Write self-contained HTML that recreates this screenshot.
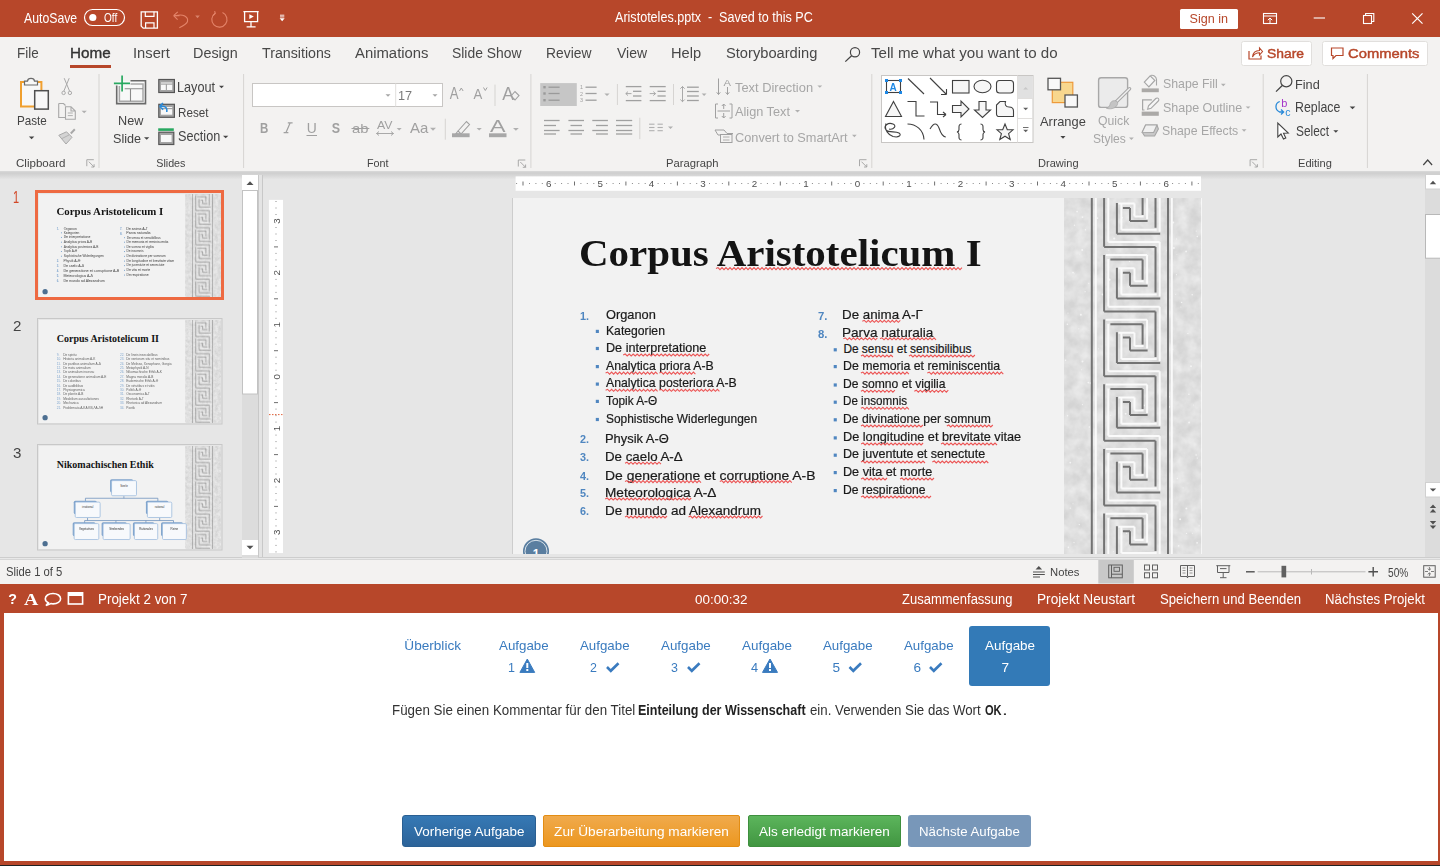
<!DOCTYPE html>
<html><head><meta charset="utf-8">
<style>
*{box-sizing:border-box;margin:0;padding:0}
html,body{width:1440px;height:866px;overflow:hidden;background:#E6E6E6;font-family:"Liberation Sans",sans-serif;position:relative}
.a{position:absolute}
.t{position:absolute;white-space:pre;transform-origin:0 0}
svg{position:absolute;overflow:visible}
.th .t:not([style*="Serif"]){opacity:.7}
</style></head><body>

<div class="a" style="left:0;top:0;width:1440px;height:37px;background:#B7472A"></div>
<div class="a" style="left:0;top:37px;width:1440px;height:134px;background:#F3F2F1"></div>
<div class="a" style="left:0;top:171px;width:1440px;height:8px;background:linear-gradient(#DADADA 0,#CECECE 25%,#E4E4E4 100%)"></div>
<div class="a" style="left:0;top:557px;width:1440px;height:1px;background:#CDCDCD"></div><div class="a" style="left:0;top:558px;width:1440px;height:1px;background:#E8E8E8"></div><div class="a" style="left:0;top:559px;width:1440px;height:1px;background:#D6D6D6"></div>
<div class="a" style="left:0;top:560px;width:1440px;height:24px;background:#F3F2F1"></div>
<div class="a" style="left:0;top:584px;width:1440px;height:282px;background:#B7472A"></div>
<div class="a" style="left:4px;top:613px;width:1434px;height:248px;background:#FFFFFF"></div>
<div class="a" style="left:0;top:865px;width:1440px;height:1px;background:#222"></div>
<div class="a" style="left:969px;top:626px;width:81px;height:60px;background:#337AB7;border-radius:3px"></div>
<div class="a" style="left:402px;top:815px;width:134px;height:32px;background:linear-gradient(#3679B5,#2C6399);border-radius:3px;border:1px solid #2A5F92"></div>
<div class="a" style="left:543px;top:815px;width:197px;height:32px;background:linear-gradient(#F0AA4C,#EC971F);border-radius:2px;border:1px solid #E38D13"></div>
<div class="a" style="left:748px;top:815px;width:153px;height:32px;background:linear-gradient(#5CB55C,#419641);border-radius:2px;border:1px solid #3E8F3E"></div>
<div class="a" style="left:908px;top:815px;width:123px;height:32px;background:#7897B9;border-radius:3px"></div>
<div class="a" style="left:512px;top:198px;width:1px;height:356px;background:#CDCDCD"></div><div class="a" style="left:513px;top:198px;width:689px;height:356px;overflow:hidden;background:#F2F2F2"><svg width="688" height="391" style="left:0;top:0"><defs><filter id="mrb" x="0" y="0" width="100%%" height="100%%"><feTurbulence type="fractalNoise" baseFrequency="0.08" numOctaves="3" seed="4"/><feColorMatrix values="0 0 0 0 1  0 0 0 0 1  0 0 0 0 1  0 0 0 -1.6 1.25"/></filter></defs><rect x="551" y="-20" width="137" height="431" fill="#D4D4D4"/><rect x="551" y="-20" width="137" height="431" fill="#fff" filter="url(#mrb)" opacity="0.55"/><g fill="#F4F4F4"><circle cx="595.7" cy="52.0" r="0.5"/><circle cx="561.4" cy="27.3" r="0.7"/><circle cx="663.6" cy="40.9" r="0.6"/><circle cx="667.9" cy="109.0" r="0.5"/><circle cx="567.9" cy="116.8" r="1.0"/><circle cx="576.4" cy="229.0" r="0.8"/><circle cx="560.0" cy="74.6" r="0.9"/><circle cx="613.2" cy="113.2" r="0.9"/><circle cx="670.1" cy="289.8" r="0.6"/><circle cx="684.3" cy="38.5" r="0.7"/><circle cx="654.2" cy="52.5" r="0.7"/><circle cx="557.3" cy="264.6" r="0.9"/><circle cx="613.6" cy="335.2" r="0.7"/><circle cx="641.7" cy="14.9" r="0.9"/><circle cx="686.1" cy="327.8" r="0.6"/><circle cx="560.0" cy="305.7" r="0.5"/><circle cx="585.4" cy="150.7" r="0.5"/><circle cx="612.6" cy="215.8" r="1.0"/><circle cx="668.6" cy="104.4" r="0.7"/><circle cx="600.4" cy="353.4" r="0.5"/><circle cx="575.8" cy="85.3" r="0.6"/><circle cx="552.6" cy="162.2" r="0.7"/><circle cx="628.5" cy="381.7" r="0.8"/><circle cx="673.4" cy="310.6" r="1.0"/><circle cx="659.7" cy="151.3" r="0.7"/><circle cx="566.0" cy="250.7" r="0.4"/><circle cx="561.1" cy="75.8" r="0.5"/><circle cx="572.4" cy="31.7" r="0.7"/><circle cx="555.4" cy="349.4" r="0.8"/><circle cx="572.1" cy="93.7" r="0.6"/><circle cx="601.2" cy="40.5" r="1.1"/><circle cx="565.8" cy="130.8" r="0.6"/><circle cx="663.9" cy="56.4" r="0.4"/><circle cx="680.4" cy="207.1" r="0.5"/><circle cx="684.1" cy="344.8" r="0.9"/><circle cx="656.2" cy="208.9" r="0.9"/><circle cx="596.5" cy="81.7" r="1.1"/><circle cx="667.1" cy="321.3" r="1.0"/><circle cx="589.7" cy="96.5" r="1.1"/><circle cx="612.4" cy="375.1" r="1.1"/><circle cx="578.6" cy="74.0" r="0.8"/><circle cx="673.5" cy="335.4" r="0.7"/><circle cx="641.2" cy="363.9" r="0.9"/><circle cx="616.5" cy="63.4" r="0.6"/><circle cx="660.1" cy="389.4" r="0.7"/><circle cx="606.2" cy="379.1" r="0.5"/><circle cx="569.2" cy="52.1" r="1.0"/><circle cx="660.9" cy="50.1" r="1.0"/><circle cx="684.3" cy="260.1" r="0.6"/><circle cx="683.1" cy="257.0" r="0.8"/><circle cx="678.0" cy="168.3" r="1.0"/><circle cx="663.5" cy="76.7" r="0.6"/><circle cx="674.9" cy="135.4" r="0.7"/><circle cx="675.9" cy="196.2" r="0.8"/><circle cx="576.7" cy="-8.4" r="1.0"/><circle cx="575.3" cy="184.6" r="0.9"/><circle cx="656.3" cy="198.7" r="0.8"/><circle cx="654.6" cy="365.0" r="0.7"/><circle cx="616.5" cy="377.0" r="1.0"/><circle cx="679.2" cy="96.7" r="0.8"/><circle cx="679.3" cy="335.2" r="0.5"/><circle cx="568.4" cy="171.7" r="0.5"/><circle cx="584.5" cy="20.1" r="0.9"/><circle cx="673.1" cy="53.5" r="0.9"/><circle cx="641.1" cy="48.8" r="1.1"/><circle cx="581.6" cy="381.5" r="0.7"/><circle cx="617.8" cy="396.8" r="0.5"/><circle cx="578.4" cy="120.9" r="0.9"/><circle cx="554.6" cy="217.7" r="0.7"/><circle cx="554.4" cy="126.2" r="0.8"/><circle cx="621.2" cy="16.4" r="1.0"/><circle cx="683.2" cy="33.1" r="0.6"/><circle cx="557.3" cy="310.2" r="0.6"/><circle cx="569.5" cy="163.5" r="1.0"/><circle cx="662.6" cy="96.3" r="0.5"/><circle cx="676.1" cy="224.5" r="0.9"/><circle cx="564.1" cy="13.6" r="0.9"/><circle cx="609.4" cy="19.8" r="0.8"/><circle cx="660.2" cy="24.4" r="1.0"/><circle cx="561.0" cy="344.6" r="0.7"/><circle cx="597.8" cy="217.3" r="0.6"/><circle cx="569.4" cy="206.6" r="0.6"/><circle cx="566.8" cy="56.4" r="0.4"/><circle cx="579.2" cy="118.2" r="0.6"/><circle cx="654.5" cy="109.2" r="0.8"/><circle cx="576.0" cy="132.6" r="0.4"/><circle cx="585.8" cy="-3.7" r="0.8"/><circle cx="577.6" cy="185.1" r="1.1"/><circle cx="566.3" cy="326.6" r="0.7"/><circle cx="620.4" cy="272.7" r="0.6"/><circle cx="664.4" cy="280.5" r="0.8"/><circle cx="569.5" cy="19.1" r="0.9"/><circle cx="665.6" cy="347.8" r="0.9"/><circle cx="587.5" cy="385.3" r="0.8"/><circle cx="564.1" cy="154.2" r="0.4"/><circle cx="555.0" cy="115.0" r="0.6"/><circle cx="631.1" cy="207.5" r="0.9"/></g><rect x="577.8" y="-20" width="2" height="431" fill="#737373"/><rect x="581.8" y="-20" width="2" height="431" fill="#FAFAFA"/><rect x="654" y="-20" width="2" height="431" fill="#737373"/><rect x="657.8" y="-20" width="2" height="431" fill="#FAFAFA"/><path d="M595.3 -85.3 H646.7 M646.7 -85.3 V-30.9 M595.3 -68.2 V-20.8 M592.8 -72.2 H634.1 M634.1 -72.2 V-43.5 M608.4 -59.1 V-32.9 M608.4 -32.9 H643.7 M605.4 -59.1 H621.5 M621.5 -59.1 V-46.0 M621.5 -46.0 H630.6 M595.3 -20.7 H646.7 M646.7 -20.7 V33.7 M595.3 -3.6 V43.8 M592.8 -7.6 H634.1 M634.1 -7.6 V21.1 M608.4 5.5 V31.7 M608.4 31.7 H643.7 M605.4 5.5 H621.5 M621.5 5.5 V18.6 M621.5 18.6 H630.6 M595.3 44.0 H646.7 M646.7 44.0 V98.4 M595.3 61.1 V108.5 M592.8 57.1 H634.1 M634.1 57.1 V85.8 M608.4 70.2 V96.4 M608.4 96.4 H643.7 M605.4 70.2 H621.5 M621.5 70.2 V83.3 M621.5 83.3 H630.6 M595.3 108.7 H646.7 M646.7 108.7 V163.1 M595.3 125.8 V173.2 M592.8 121.8 H634.1 M634.1 121.8 V150.4 M608.4 134.8 V161.1 M608.4 161.1 H643.7 M605.4 134.8 H621.5 M621.5 134.8 V147.9 M621.5 147.9 H630.6 M595.3 173.3 H646.7 M646.7 173.3 V227.7 M595.3 190.4 V237.8 M592.8 186.4 H634.1 M634.1 186.4 V215.1 M608.4 199.5 V225.7 M608.4 225.7 H643.7 M605.4 199.5 H621.5 M621.5 199.5 V212.6 M621.5 212.6 H630.6 M595.3 238.0 H646.7 M646.7 238.0 V292.4 M595.3 255.1 V302.5 M592.8 251.1 H634.1 M634.1 251.1 V279.8 M608.4 264.2 V290.4 M608.4 290.4 H643.7 M605.4 264.2 H621.5 M621.5 264.2 V277.2 M621.5 277.2 H630.6 M595.3 302.6 H646.7 M646.7 302.6 V357.0 M595.3 319.7 V367.1 M592.8 315.7 H634.1 M634.1 315.7 V344.4 M608.4 328.8 V355.0 M608.4 355.0 H643.7 M605.4 328.8 H621.5 M621.5 328.8 V341.9 M621.5 341.9 H630.6 M595.3 367.2 H646.7 M646.7 367.2 V421.6 M595.3 384.4 V431.8 M592.8 380.4 H634.1 M634.1 380.4 V409.1 M608.4 393.4 V419.6 M608.4 419.6 H643.7 M605.4 393.4 H621.5 M621.5 393.4 V406.6 M621.5 406.6 H630.6 M595.3 431.9 H646.7 M646.7 431.9 V486.3 M595.3 449.0 V496.4 M592.8 445.0 H634.1 M634.1 445.0 V473.7 M608.4 458.1 V484.3 M608.4 484.3 H643.7 M605.4 458.1 H621.5 M621.5 458.1 V471.2 M621.5 471.2 H630.6 M595.3 496.6 H646.7 M646.7 496.6 V551.0 M595.3 513.7 V561.1 M592.8 509.7 H634.1 M634.1 509.7 V538.4 M608.4 522.8 V549.0 M608.4 549.0 H643.7 M605.4 522.8 H621.5 M621.5 522.8 V535.9 M621.5 535.9 H630.6" fill="none" stroke="#FAFAFA" stroke-width="2"/><path d="M591.1 -80.5 H642.5 M642.5 -80.5 V-34.9 M591.1 -72.4 V-15.8 M597.4 -67.7 H629.6 M629.6 -67.7 V-47.5 M603.9 -59.6 V-28.9 M603.9 -28.9 H647.2 M609.9 -54.6 H617.0 M617.0 -54.6 V-41.5 M617.0 -41.5 H634.6 M591.1 -15.8 H642.5 M642.5 -15.8 V29.7 M591.1 -7.8 V48.8 M597.4 -3.1 H629.6 M629.6 -3.1 V17.1 M603.9 5.0 V35.7 M603.9 35.7 H647.2 M609.9 10.0 H617.0 M617.0 10.0 V23.1 M617.0 23.1 H634.6 M591.1 48.9 H642.5 M642.5 48.9 V94.4 M591.1 56.9 V113.5 M597.4 61.6 H629.6 M629.6 61.6 V81.8 M603.9 69.7 V100.4 M603.9 100.4 H647.2 M609.9 74.7 H617.0 M617.0 74.7 V87.8 M617.0 87.8 H634.6 M591.1 113.5 H642.5 M642.5 113.5 V159.1 M591.1 121.6 V178.2 M597.4 126.2 H629.6 M629.6 126.2 V146.4 M603.9 134.3 V165.1 M603.9 165.1 H647.2 M609.9 139.4 H617.0 M617.0 139.4 V152.4 M617.0 152.4 H634.6 M591.1 178.2 H642.5 M642.5 178.2 V223.7 M591.1 186.2 V242.8 M597.4 190.9 H629.6 M629.6 190.9 V211.1 M603.9 199.0 V229.7 M603.9 229.7 H647.2 M609.9 204.0 H617.0 M617.0 204.0 V217.1 M617.0 217.1 H634.6 M591.1 242.8 H642.5 M642.5 242.8 V288.4 M591.1 250.9 V307.5 M597.4 255.6 H629.6 M629.6 255.6 V275.8 M603.9 263.7 V294.4 M603.9 294.4 H647.2 M609.9 268.7 H617.0 M617.0 268.7 V281.8 M617.0 281.8 H634.6 M591.1 307.5 H642.5 M642.5 307.5 V353.0 M591.1 315.5 V372.1 M597.4 320.2 H629.6 M629.6 320.2 V340.4 M603.9 328.3 V359.0 M603.9 359.0 H647.2 M609.9 333.3 H617.0 M617.0 333.3 V346.4 M617.0 346.4 H634.6 M591.1 372.1 H642.5 M642.5 372.1 V417.6 M591.1 380.1 V436.8 M597.4 384.9 H629.6 M629.6 384.9 V405.1 M603.9 392.9 V423.6 M603.9 423.6 H647.2 M609.9 397.9 H617.0 M617.0 397.9 V411.1 M617.0 411.1 H634.6 M591.1 436.8 H642.5 M642.5 436.8 V482.3 M591.1 444.8 V501.4 M597.4 449.5 H629.6 M629.6 449.5 V469.7 M603.9 457.6 V488.3 M603.9 488.3 H647.2 M609.9 462.6 H617.0 M617.0 462.6 V475.7 M617.0 475.7 H634.6 M591.1 501.4 H642.5 M642.5 501.4 V547.0 M591.1 509.5 V566.1 M597.4 514.2 H629.6 M629.6 514.2 V534.4 M603.9 522.3 V553.0 M603.9 553.0 H647.2 M609.9 527.3 H617.0 M617.0 527.3 V540.4 M617.0 540.4 H634.6" fill="none" stroke="#737373" stroke-width="2"/></svg><svg width="688" height="391" style="left:0;top:0"><rect x="82.8" y="131.8" width="3.1" height="3.2" fill="#4F86C0"/><rect x="82.8" y="148.9" width="3.1" height="3.2" fill="#4F86C0"/><rect x="82.8" y="167.0" width="3.1" height="3.2" fill="#4F86C0"/><rect x="82.8" y="184.5" width="3.1" height="3.2" fill="#4F86C0"/><rect x="82.8" y="201.8" width="3.1" height="3.2" fill="#4F86C0"/><rect x="82.8" y="219.9" width="3.1" height="3.2" fill="#4F86C0"/><rect x="320.7" y="150.2" width="3.1" height="3.2" fill="#4F86C0"/><rect x="320.7" y="167.0" width="3.1" height="3.2" fill="#4F86C0"/><rect x="320.7" y="185.4" width="3.1" height="3.2" fill="#4F86C0"/><rect x="320.7" y="202.6" width="3.1" height="3.2" fill="#4F86C0"/><rect x="320.7" y="220.2" width="3.1" height="3.2" fill="#4F86C0"/><rect x="320.7" y="238.3" width="3.1" height="3.2" fill="#4F86C0"/><rect x="320.7" y="255.6" width="3.1" height="3.2" fill="#4F86C0"/><rect x="320.7" y="273.0" width="3.1" height="3.2" fill="#4F86C0"/><rect x="320.7" y="291.0" width="3.1" height="3.2" fill="#4F86C0"/></svg><div class="t" style="left:65.81px;top:37.22px;font-size:37.692px;line-height:37.692px;color:#141414;font-weight:bold;font-family:'Liberation Serif', serif;transform:scaleX(1.0865);">Corpus Aristotelicum I</div>
<div class="t" style="left:92.60px;top:110.41px;font-size:13.043px;line-height:13.043px;color:#1A1A1A;transform:scaleX(0.9829);-webkit-text-stroke:0.2px #1A1A1A;">Organon</div>
<div class="t" style="left:92.60px;top:127.60px;font-size:11.884px;line-height:11.884px;color:#1A1A1A;transform:scaleX(1.0258);-webkit-text-stroke:0.2px #1A1A1A;">Kategorien</div>
<div class="t" style="left:92.60px;top:144.70px;font-size:11.884px;line-height:11.884px;color:#1A1A1A;transform:scaleX(1.0623);-webkit-text-stroke:0.2px #1A1A1A;">De interpretatione</div>
<div class="t" style="left:92.60px;top:162.80px;font-size:11.884px;line-height:11.884px;color:#1A1A1A;transform:scaleX(1.0322);-webkit-text-stroke:0.2px #1A1A1A;">Analytica priora A-B</div>
<div class="t" style="left:92.60px;top:180.30px;font-size:11.884px;line-height:11.884px;color:#1A1A1A;transform:scaleX(1.0309);-webkit-text-stroke:0.2px #1A1A1A;">Analytica posteriora A-B</div>
<div class="t" style="left:92.60px;top:197.60px;font-size:11.884px;line-height:11.884px;color:#1A1A1A;transform:scaleX(0.9943);-webkit-text-stroke:0.2px #1A1A1A;">Topik A-Θ</div>
<div class="t" style="left:92.60px;top:215.70px;font-size:11.884px;line-height:11.884px;color:#1A1A1A;transform:scaleX(1.0033);-webkit-text-stroke:0.2px #1A1A1A;">Sophistische Widerlegungen</div>
<div class="t" style="left:91.61px;top:233.81px;font-size:13.043px;line-height:13.043px;color:#1A1A1A;transform:scaleX(0.9901);-webkit-text-stroke:0.2px #1A1A1A;">Physik A-Θ</div>
<div class="t" style="left:91.58px;top:252.21px;font-size:13.043px;line-height:13.043px;color:#1A1A1A;transform:scaleX(1.0213);-webkit-text-stroke:0.2px #1A1A1A;">De caelo A-Δ</div>
<div class="t" style="left:91.53px;top:270.61px;font-size:13.043px;line-height:13.043px;color:#1A1A1A;transform:scaleX(1.0680);-webkit-text-stroke:0.2px #1A1A1A;">De generatione et corruptione A-B</div>
<div class="t" style="left:91.55px;top:287.91px;font-size:13.043px;line-height:13.043px;color:#1A1A1A;transform:scaleX(1.0460);-webkit-text-stroke:0.2px #1A1A1A;">Meteorologica A-Δ</div>
<div class="t" style="left:91.56px;top:306.01px;font-size:13.043px;line-height:13.043px;color:#1A1A1A;transform:scaleX(1.0352);-webkit-text-stroke:0.2px #1A1A1A;">De mundo ad Alexandrum</div>
<div class="t" style="left:329.38px;top:110.41px;font-size:13.043px;line-height:13.043px;color:#1A1A1A;transform:scaleX(1.0239);-webkit-text-stroke:0.2px #1A1A1A;">De anima A-Γ</div>
<div class="t" style="left:329.36px;top:128.41px;font-size:13.043px;line-height:13.043px;color:#1A1A1A;transform:scaleX(1.0423);-webkit-text-stroke:0.2px #1A1A1A;">Parva naturalia</div>
<div class="t" style="left:330.40px;top:146.00px;font-size:11.884px;line-height:11.884px;color:#1A1A1A;-webkit-text-stroke:0.2px #1A1A1A;">De sensu et sensibilibus</div>
<div class="t" style="left:330.40px;top:162.80px;font-size:11.884px;line-height:11.884px;color:#1A1A1A;transform:scaleX(1.0401);-webkit-text-stroke:0.2px #1A1A1A;">De memoria et reminiscentia</div>
<div class="t" style="left:330.40px;top:181.20px;font-size:11.884px;line-height:11.884px;color:#1A1A1A;transform:scaleX(1.0217);-webkit-text-stroke:0.2px #1A1A1A;">De somno et vigilia</div>
<div class="t" style="left:330.40px;top:198.40px;font-size:11.884px;line-height:11.884px;color:#1A1A1A;transform:scaleX(0.9801);-webkit-text-stroke:0.2px #1A1A1A;">De insomnis</div>
<div class="t" style="left:330.40px;top:216.00px;font-size:11.884px;line-height:11.884px;color:#1A1A1A;transform:scaleX(1.0231);-webkit-text-stroke:0.2px #1A1A1A;">De divinatione per somnum</div>
<div class="t" style="left:330.40px;top:234.10px;font-size:11.884px;line-height:11.884px;color:#1A1A1A;transform:scaleX(1.0711);-webkit-text-stroke:0.2px #1A1A1A;">De longitudine et brevitate vitae</div>
<div class="t" style="left:330.40px;top:251.40px;font-size:11.884px;line-height:11.884px;color:#1A1A1A;transform:scaleX(1.0558);-webkit-text-stroke:0.2px #1A1A1A;">De juventute et senectute</div>
<div class="t" style="left:330.40px;top:268.80px;font-size:11.884px;line-height:11.884px;color:#1A1A1A;transform:scaleX(1.0640);-webkit-text-stroke:0.2px #1A1A1A;">De vita et morte</div>
<div class="t" style="left:330.40px;top:286.80px;font-size:11.884px;line-height:11.884px;color:#1A1A1A;transform:scaleX(1.0257);-webkit-text-stroke:0.2px #1A1A1A;">De respiratione</div>
<div class="t" style="left:66.90px;top:112.51px;font-size:10.580px;line-height:10.580px;color:#4F86C0;font-weight:bold;transform:scaleX(1.0244);">1.</div>
<div class="t" style="left:66.90px;top:235.91px;font-size:10.580px;line-height:10.580px;color:#4F86C0;font-weight:bold;transform:scaleX(1.0244);">2.</div>
<div class="t" style="left:66.90px;top:254.31px;font-size:10.580px;line-height:10.580px;color:#4F86C0;font-weight:bold;transform:scaleX(1.0244);">3.</div>
<div class="t" style="left:66.90px;top:272.71px;font-size:10.580px;line-height:10.580px;color:#4F86C0;font-weight:bold;transform:scaleX(1.0244);">4.</div>
<div class="t" style="left:66.90px;top:290.01px;font-size:10.580px;line-height:10.580px;color:#4F86C0;font-weight:bold;transform:scaleX(1.0244);">5.</div>
<div class="t" style="left:66.90px;top:308.11px;font-size:10.580px;line-height:10.580px;color:#4F86C0;font-weight:bold;transform:scaleX(1.0244);">6.</div>
<div class="t" style="left:304.60px;top:112.51px;font-size:10.580px;line-height:10.580px;color:#4F86C0;font-weight:bold;transform:scaleX(1.0695);">7.</div>
<div class="t" style="left:304.60px;top:130.51px;font-size:10.580px;line-height:10.580px;color:#4F86C0;font-weight:bold;transform:scaleX(1.0695);">8.</div><svg width="688" height="391" style="left:0;top:0"><path d="M203.0 70.6 L205.0 69.6 L207.0 71.6 L209.0 69.6 L211.0 71.6 L213.0 69.6 L215.0 71.6 L217.0 69.6 L219.0 71.6 L221.0 69.6 L223.0 71.6 L225.0 69.6 L227.0 71.6 L229.0 69.6 L231.0 71.6 L233.0 69.6 L235.0 71.6 L237.0 69.6 L239.0 71.6 L241.0 69.6 L243.0 71.6 L245.0 69.6 L247.0 71.6 L249.0 69.6 L251.0 71.6 L253.0 69.6 L255.0 71.6 L257.0 69.6 L259.0 71.6 L261.0 69.6 L263.0 71.6 L265.0 69.6 L267.0 71.6 L269.0 69.6 L271.0 71.6 L273.0 69.6 L275.0 71.6 L277.0 69.6 L279.0 71.6 L281.0 69.6 L283.0 71.6 L285.0 69.6 L287.0 71.6 L289.0 69.6 L291.0 71.6 L293.0 69.6 L295.0 71.6 L297.0 69.6 L299.0 71.6 L301.0 69.6 L303.0 71.6 L305.0 69.6 L307.0 71.6 L309.0 69.6 L311.0 71.6 L313.0 69.6 L315.0 71.6 L317.0 69.6 L319.0 71.6 L321.0 69.6 L323.0 71.6 L325.0 69.6 L327.0 71.6 L329.0 69.6 L331.0 71.6 L333.0 69.6 L335.0 71.6 L337.0 69.6 L339.0 71.6 L341.0 69.6 L343.0 71.6 L345.0 69.6 L347.0 71.6 L349.0 69.6 L351.0 71.6 L353.0 69.6 L355.0 71.6 L357.0 69.6 L359.0 71.6 L361.0 69.6 L363.0 71.6 L365.0 69.6 L367.0 71.6 L369.0 69.6 L371.0 71.6 L373.0 69.6 L375.0 71.6 L377.0 69.6 L379.0 71.6 L381.0 69.6 L383.0 71.6 L385.0 69.6 L387.0 71.6 L389.0 69.6 L391.0 71.6 L393.0 69.6 L395.0 71.6 L397.0 69.6 L399.0 71.6 L401.0 69.6 L403.0 71.6 L405.0 69.6 L407.0 71.6 L409.0 69.6 L411.0 71.6 L413.0 69.6 L415.0 71.6 L417.0 69.6 L419.0 71.6 L421.0 69.6 L423.0 71.6 L425.0 69.6 L427.0 71.6 L429.0 69.6 L431.0 71.6 L433.0 69.6 L435.0 71.6 L437.0 69.6 L439.0 71.6 L441.0 69.6 L443.0 71.6 L445.0 69.6 L447.0 71.6 L449.0 69.6" fill="none" stroke="#EC5656" stroke-width="1.1"/>
<path d="M110.2 157.0 L112.2 156.0 L114.2 158.0 L116.2 156.0 L118.2 158.0 L120.2 156.0 L122.2 158.0 L124.2 156.0 L126.2 158.0 L128.2 156.0 L130.2 158.0 L132.2 156.0 L134.2 158.0 L136.2 156.0 L138.2 158.0 L140.2 156.0 L142.2 158.0 L144.2 156.0 L146.2 158.0 L148.2 156.0 L150.2 158.0 L152.2 156.0 L154.2 158.0 L156.2 156.0 L158.2 158.0 L160.2 156.0 L162.2 158.0 L164.2 156.0 L166.2 158.0 L168.2 156.0 L170.2 158.0 L172.2 156.0 L174.2 158.0 L176.2 156.0 L178.2 158.0 L180.2 156.0 L182.2 158.0 L184.2 156.0 L186.2 158.0 L188.2 156.0 L190.2 158.0 L192.2 156.0 L194.2 158.0 L196.2 156.0" fill="none" stroke="#EC5656" stroke-width="1.1"/>
<path d="M92.6 175.1 L94.6 174.1 L96.6 176.1 L98.6 174.1 L100.6 176.1 L102.6 174.1 L104.6 176.1 L106.6 174.1 L108.6 176.1 L110.6 174.1 L112.6 176.1 L114.6 174.1 L116.6 176.1 L118.6 174.1 L120.6 176.1 L122.6 174.1 L124.6 176.1 L126.6 174.1 L128.6 176.1 L130.6 174.1 L132.6 176.1 L134.6 174.1 L136.6 176.1 L138.6 174.1 L140.6 176.1 L142.6 174.1 L144.6 176.1" fill="none" stroke="#EC5656" stroke-width="1.1"/>
<path d="M146.4 175.1 L148.4 174.1 L150.4 176.1 L152.4 174.1 L154.4 176.1 L156.4 174.1 L158.4 176.1 L160.4 174.1 L162.4 176.1 L164.4 174.1 L166.4 176.1 L168.4 174.1 L170.4 176.1 L172.4 174.1 L174.4 176.1 L176.4 174.1 L178.4 176.1 L180.4 174.1 L182.4 176.1" fill="none" stroke="#EC5656" stroke-width="1.1"/>
<path d="M92.6 192.3 L94.6 191.3 L96.6 193.3 L98.6 191.3 L100.6 193.3 L102.6 191.3 L104.6 193.3 L106.6 191.3 L108.6 193.3 L110.6 191.3 L112.6 193.3 L114.6 191.3 L116.6 193.3 L118.6 191.3 L120.6 193.3 L122.6 191.3 L124.6 193.3 L126.6 191.3 L128.6 193.3 L130.6 191.3 L132.6 193.3 L134.6 191.3 L136.6 193.3 L138.6 191.3 L140.6 193.3 L142.6 191.3 L144.6 193.3" fill="none" stroke="#EC5656" stroke-width="1.1"/>
<path d="M146.4 192.3 L148.4 191.3 L150.4 193.3 L152.4 191.3 L154.4 193.3 L156.4 191.3 L158.4 193.3 L160.4 191.3 L162.4 193.3 L164.4 191.3 L166.4 193.3 L168.4 191.3 L170.4 193.3 L172.4 191.3 L174.4 193.3 L176.4 191.3 L178.4 193.3 L180.4 191.3 L182.4 193.3 L184.4 191.3 L186.4 193.3 L188.4 191.3 L190.4 193.3 L192.4 191.3 L194.4 193.3 L196.4 191.3 L198.4 193.3 L200.4 191.3 L202.4 193.3 L204.4 191.3 L206.4 193.3" fill="none" stroke="#EC5656" stroke-width="1.1"/>
<path d="M112.0 265.2 L114.0 264.2 L116.0 266.2 L118.0 264.2 L120.0 266.2 L122.0 264.2 L124.0 266.2 L126.0 264.2 L128.0 266.2 L130.0 264.2 L132.0 266.2 L134.0 264.2 L136.0 266.2 L138.0 264.2 L140.0 266.2 L142.0 264.2 L144.0 266.2 L146.0 264.2 L148.0 266.2" fill="none" stroke="#EC5656" stroke-width="1.1"/>
<path d="M112.0 283.6 L114.0 282.6 L116.0 284.6 L118.0 282.6 L120.0 284.6 L122.0 282.6 L124.0 284.6 L126.0 282.6 L128.0 284.6 L130.0 282.6 L132.0 284.6 L134.0 282.6 L136.0 284.6 L138.0 282.6 L140.0 284.6 L142.0 282.6 L144.0 284.6 L146.0 282.6 L148.0 284.6 L150.0 282.6 L152.0 284.6 L154.0 282.6 L156.0 284.6 L158.0 282.6 L160.0 284.6 L162.0 282.6 L164.0 284.6 L166.0 282.6 L168.0 284.6 L170.0 282.6 L172.0 284.6 L174.0 282.6 L176.0 284.6 L178.0 282.6 L180.0 284.6 L182.0 282.6 L184.0 284.6 L186.0 282.6 L188.0 284.6" fill="none" stroke="#EC5656" stroke-width="1.1"/>
<path d="M206.8 283.6 L208.8 282.6 L210.8 284.6 L212.8 282.6 L214.8 284.6 L216.8 282.6 L218.8 284.6 L220.8 282.6 L222.8 284.6 L224.8 282.6 L226.8 284.6 L228.8 282.6 L230.8 284.6 L232.8 282.6 L234.8 284.6 L236.8 282.6 L238.8 284.6 L240.8 282.6 L242.8 284.6 L244.8 282.6 L246.8 284.6 L248.8 282.6 L250.8 284.6 L252.8 282.6 L254.8 284.6 L256.8 282.6 L258.8 284.6 L260.8 282.6 L262.8 284.6 L264.8 282.6 L266.8 284.6 L268.8 282.6 L270.8 284.6 L272.8 282.6 L274.8 284.6 L276.8 282.6 L278.8 284.6" fill="none" stroke="#EC5656" stroke-width="1.1"/>
<path d="M92.2 301.0 L94.2 300.0 L96.2 302.0 L98.2 300.0 L100.2 302.0 L102.2 300.0 L104.2 302.0 L106.2 300.0 L108.2 302.0 L110.2 300.0 L112.2 302.0 L114.2 300.0 L116.2 302.0 L118.2 300.0 L120.2 302.0 L122.2 300.0 L124.2 302.0 L126.2 300.0 L128.2 302.0 L130.2 300.0 L132.2 302.0 L134.2 300.0 L136.2 302.0 L138.2 300.0 L140.2 302.0 L142.2 300.0 L144.2 302.0 L146.2 300.0 L148.2 302.0 L150.2 300.0 L152.2 302.0 L154.2 300.0 L156.2 302.0 L158.2 300.0 L160.2 302.0 L162.2 300.0 L164.2 302.0 L166.2 300.0 L168.2 302.0 L170.2 300.0 L172.2 302.0 L174.2 300.0 L176.2 302.0 L178.2 300.0" fill="none" stroke="#EC5656" stroke-width="1.1"/>
<path d="M112.0 319.0 L114.0 318.0 L116.0 320.0 L118.0 318.0 L120.0 320.0 L122.0 318.0 L124.0 320.0 L126.0 318.0 L128.0 320.0 L130.0 318.0 L132.0 320.0 L134.0 318.0 L136.0 320.0 L138.0 318.0 L140.0 320.0 L142.0 318.0 L144.0 320.0 L146.0 318.0 L148.0 320.0 L150.0 318.0 L152.0 320.0 L154.0 318.0" fill="none" stroke="#EC5656" stroke-width="1.1"/>
<path d="M175.5 319.0 L177.5 318.0 L179.5 320.0 L181.5 318.0 L183.5 320.0 L185.5 318.0 L187.5 320.0 L189.5 318.0 L191.5 320.0 L193.5 318.0 L195.5 320.0 L197.5 318.0 L199.5 320.0 L201.5 318.0 L203.5 320.0 L205.5 318.0 L207.5 320.0 L209.5 318.0 L211.5 320.0 L213.5 318.0 L215.5 320.0 L217.5 318.0 L219.5 320.0 L221.5 318.0 L223.5 320.0 L225.5 318.0 L227.5 320.0 L229.5 318.0 L231.5 320.0 L233.5 318.0 L235.5 320.0 L237.5 318.0 L239.5 320.0 L241.5 318.0 L243.5 320.0 L245.5 318.0 L247.5 320.0 L249.5 318.0" fill="none" stroke="#EC5656" stroke-width="1.1"/>
<path d="M349.3 123.3 L351.3 122.3 L353.3 124.3 L355.3 122.3 L357.3 124.3 L359.3 122.3 L361.3 124.3 L363.3 122.3 L365.3 124.3 L367.3 122.3 L369.3 124.3 L371.3 122.3 L373.3 124.3 L375.3 122.3 L377.3 124.3 L379.3 122.3 L381.3 124.3 L383.3 122.3 L385.3 124.3 L387.3 122.3" fill="none" stroke="#EC5656" stroke-width="1.1"/>
<path d="M330.4 140.8 L332.4 139.8 L334.4 141.8 L336.4 139.8 L338.4 141.8 L340.4 139.8 L342.4 141.8 L344.4 139.8 L346.4 141.8 L348.4 139.8 L350.4 141.8 L352.4 139.8 L354.4 141.8 L356.4 139.8 L358.4 141.8 L360.4 139.8 L362.4 141.8 L364.4 139.8" fill="none" stroke="#EC5656" stroke-width="1.1"/>
<path d="M367.0 140.8 L369.0 139.8 L371.0 141.8 L373.0 139.8 L375.0 141.8 L377.0 139.8 L379.0 141.8 L381.0 139.8 L383.0 141.8 L385.0 139.8 L387.0 141.8 L389.0 139.8 L391.0 141.8 L393.0 139.8 L395.0 141.8 L397.0 139.8 L399.0 141.8 L401.0 139.8 L403.0 141.8 L405.0 139.8 L407.0 141.8 L409.0 139.8 L411.0 141.8 L413.0 139.8 L415.0 141.8 L417.0 139.8 L419.0 141.8 L421.0 139.8 L423.0 141.8" fill="none" stroke="#EC5656" stroke-width="1.1"/>
<path d="M347.9 158.0 L349.9 157.0 L351.9 159.0 L353.9 157.0 L355.9 159.0 L357.9 157.0 L359.9 159.0 L361.9 157.0 L363.9 159.0 L365.9 157.0 L367.9 159.0 L369.9 157.0 L371.9 159.0 L373.9 157.0 L375.9 159.0 L377.9 157.0 L379.9 159.0" fill="none" stroke="#EC5656" stroke-width="1.1"/>
<path d="M395.9 158.0 L397.9 157.0 L399.9 159.0 L401.9 157.0 L403.9 159.0 L405.9 157.0 L407.9 159.0 L409.9 157.0 L411.9 159.0 L413.9 157.0 L415.9 159.0 L417.9 157.0 L419.9 159.0 L421.9 157.0 L423.9 159.0 L425.9 157.0 L427.9 159.0 L429.9 157.0 L431.9 159.0 L433.9 157.0 L435.9 159.0 L437.9 157.0 L439.9 159.0 L441.9 157.0 L443.9 159.0 L445.9 157.0 L447.9 159.0 L449.9 157.0 L451.9 159.0 L453.9 157.0 L455.9 159.0 L457.9 157.0 L459.9 159.0 L461.9 157.0" fill="none" stroke="#EC5656" stroke-width="1.1"/>
<path d="M347.9 175.1 L349.9 174.1 L351.9 176.1 L353.9 174.1 L355.9 176.1 L357.9 174.1 L359.9 176.1 L361.9 174.1 L363.9 176.1 L365.9 174.1 L367.9 176.1 L369.9 174.1 L371.9 176.1 L373.9 174.1 L375.9 176.1 L377.9 174.1 L379.9 176.1 L381.9 174.1 L383.9 176.1 L385.9 174.1 L387.9 176.1 L389.9 174.1 L391.9 176.1 L393.9 174.1 L395.9 176.1" fill="none" stroke="#EC5656" stroke-width="1.1"/>
<path d="M414.3 175.1 L416.3 174.1 L418.3 176.1 L420.3 174.1 L422.3 176.1 L424.3 174.1 L426.3 176.1 L428.3 174.1 L430.3 176.1 L432.3 174.1 L434.3 176.1 L436.3 174.1 L438.3 176.1 L440.3 174.1 L442.3 176.1 L444.3 174.1 L446.3 176.1 L448.3 174.1 L450.3 176.1 L452.3 174.1 L454.3 176.1 L456.3 174.1 L458.3 176.1 L460.3 174.1 L462.3 176.1 L464.3 174.1 L466.3 176.1 L468.3 174.1 L470.3 176.1 L472.3 174.1 L474.3 176.1 L476.3 174.1 L478.3 176.1 L480.3 174.1 L482.3 176.1 L484.3 174.1 L486.3 176.1 L488.3 174.1 L490.3 176.1" fill="none" stroke="#EC5656" stroke-width="1.1"/>
<path d="M347.9 193.2 L349.9 192.2 L351.9 194.2 L353.9 192.2 L355.9 194.2 L357.9 192.2 L359.9 194.2 L361.9 192.2 L363.9 194.2 L365.9 192.2 L367.9 194.2 L369.9 192.2 L371.9 194.2 L373.9 192.2 L375.9 194.2 L377.9 192.2 L379.9 194.2 L381.9 192.2" fill="none" stroke="#EC5656" stroke-width="1.1"/>
<path d="M401.3 193.2 L403.3 192.2 L405.3 194.2 L407.3 192.2 L409.3 194.2 L411.3 192.2 L413.3 194.2 L415.3 192.2 L417.3 194.2 L419.3 192.2 L421.3 194.2 L423.3 192.2 L425.3 194.2 L427.3 192.2 L429.3 194.2 L431.3 192.2 L433.3 194.2 L435.3 192.2" fill="none" stroke="#EC5656" stroke-width="1.1"/>
<path d="M347.9 210.3 L349.9 209.3 L351.9 211.3 L353.9 209.3 L355.9 211.3 L357.9 209.3 L359.9 211.3 L361.9 209.3 L363.9 211.3 L365.9 209.3 L367.9 211.3 L369.9 209.3 L371.9 211.3 L373.9 209.3 L375.9 211.3 L377.9 209.3 L379.9 211.3 L381.9 209.3 L383.9 211.3 L385.9 209.3 L387.9 211.3 L389.9 209.3 L391.9 211.3 L393.9 209.3 L395.9 211.3" fill="none" stroke="#EC5656" stroke-width="1.1"/>
<path d="M347.9 228.0 L349.9 227.0 L351.9 229.0 L353.9 227.0 L355.9 229.0 L357.9 227.0 L359.9 229.0 L361.9 227.0 L363.9 229.0 L365.9 227.0 L367.9 229.0 L369.9 227.0 L371.9 229.0 L373.9 227.0 L375.9 229.0 L377.9 227.0 L379.9 229.0 L381.9 227.0 L383.9 229.0 L385.9 227.0 L387.9 229.0 L389.9 227.0 L391.9 229.0 L393.9 227.0 L395.9 229.0 L397.9 227.0 L399.9 229.0 L401.9 227.0 L403.9 229.0 L405.9 227.0 L407.9 229.0 L409.9 227.0" fill="none" stroke="#EC5656" stroke-width="1.1"/>
<path d="M433.8 228.0 L435.8 227.0 L437.8 229.0 L439.8 227.0 L441.8 229.0 L443.8 227.0 L445.8 229.0 L447.8 227.0 L449.8 229.0 L451.8 227.0 L453.8 229.0 L455.8 227.0 L457.8 229.0 L459.8 227.0 L461.8 229.0 L463.8 227.0 L465.8 229.0 L467.8 227.0 L469.8 229.0 L471.8 227.0 L473.8 229.0 L475.8 227.0 L477.8 229.0 L479.8 227.0" fill="none" stroke="#EC5656" stroke-width="1.1"/>
<path d="M348.1 246.0 L350.1 245.0 L352.1 247.0 L354.1 245.0 L356.1 247.0 L358.1 245.0 L360.1 247.0 L362.1 245.0 L364.1 247.0 L366.1 245.0 L368.1 247.0 L370.1 245.0 L372.1 247.0 L374.1 245.0 L376.1 247.0 L378.1 245.0 L380.1 247.0 L382.1 245.0 L384.1 247.0 L386.1 245.0 L388.1 247.0 L390.1 245.0 L392.1 247.0 L394.1 245.0 L396.1 247.0 L398.1 245.0 L400.1 247.0 L402.1 245.0 L404.1 247.0 L406.1 245.0 L408.1 247.0 L410.1 245.0" fill="none" stroke="#EC5656" stroke-width="1.1"/>
<path d="M428.0 246.0 L430.0 245.0 L432.0 247.0 L434.0 245.0 L436.0 247.0 L438.0 245.0 L440.0 247.0 L442.0 245.0 L444.0 247.0 L446.0 245.0 L448.0 247.0 L450.0 245.0 L452.0 247.0 L454.0 245.0 L456.0 247.0 L458.0 245.0 L460.0 247.0 L462.0 245.0 L464.0 247.0 L466.0 245.0 L468.0 247.0 L470.0 245.0 L472.0 247.0 L474.0 245.0 L476.0 247.0 L478.0 245.0 L480.0 247.0 L482.0 245.0 L484.0 247.0" fill="none" stroke="#EC5656" stroke-width="1.1"/>
<path d="M348.0 264.0 L350.0 263.0 L352.0 265.0 L354.0 263.0 L356.0 265.0 L358.0 263.0 L360.0 265.0 L362.0 263.0 L364.0 265.0 L366.0 263.0 L368.0 265.0 L370.0 263.0 L372.0 265.0 L374.0 263.0 L376.0 265.0 L378.0 263.0 L380.0 265.0 L382.0 263.0 L384.0 265.0 L386.0 263.0 L388.0 265.0 L390.0 263.0 L392.0 265.0 L394.0 263.0 L396.0 265.0 L398.0 263.0 L400.0 265.0 L402.0 263.0 L404.0 265.0 L406.0 263.0 L408.0 265.0 L410.0 263.0 L412.0 265.0" fill="none" stroke="#EC5656" stroke-width="1.1"/>
<path d="M419.3 264.0 L421.3 263.0 L423.3 265.0 L425.3 263.0 L427.3 265.0 L429.3 263.0 L431.3 265.0 L433.3 263.0 L435.3 265.0 L437.3 263.0 L439.3 265.0 L441.3 263.0 L443.3 265.0 L445.3 263.0 L447.3 265.0 L449.3 263.0 L451.3 265.0 L453.3 263.0 L455.3 265.0 L457.3 263.0 L459.3 265.0 L461.3 263.0 L463.3 265.0 L465.3 263.0 L467.3 265.0 L469.3 263.0 L471.3 265.0 L473.3 263.0 L475.3 265.0" fill="none" stroke="#EC5656" stroke-width="1.1"/>
<path d="M348.0 281.0 L350.0 280.0 L352.0 282.0 L354.0 280.0 L356.0 282.0 L358.0 280.0 L360.0 282.0 L362.0 280.0 L364.0 282.0 L366.0 280.0 L368.0 282.0 L370.0 280.0 L372.0 282.0 L374.0 280.0" fill="none" stroke="#EC5656" stroke-width="1.1"/>
<path d="M387.0 281.0 L389.0 280.0 L391.0 282.0 L393.0 280.0 L395.0 282.0 L397.0 280.0 L399.0 282.0 L401.0 280.0 L403.0 282.0 L405.0 280.0 L407.0 282.0 L409.0 280.0 L411.0 282.0 L413.0 280.0 L415.0 282.0 L417.0 280.0 L419.0 282.0 L421.0 280.0" fill="none" stroke="#EC5656" stroke-width="1.1"/>
<path d="M348.0 299.0 L350.0 298.0 L352.0 300.0 L354.0 298.0 L356.0 300.0 L358.0 298.0 L360.0 300.0 L362.0 298.0 L364.0 300.0 L366.0 298.0 L368.0 300.0 L370.0 298.0 L372.0 300.0 L374.0 298.0 L376.0 300.0 L378.0 298.0 L380.0 300.0 L382.0 298.0 L384.0 300.0 L386.0 298.0 L388.0 300.0 L390.0 298.0 L392.0 300.0 L394.0 298.0 L396.0 300.0 L398.0 298.0 L400.0 300.0 L402.0 298.0 L404.0 300.0 L406.0 298.0 L408.0 300.0 L410.0 298.0 L412.0 300.0 L414.0 298.0 L416.0 300.0 L418.0 298.0" fill="none" stroke="#EC5656" stroke-width="1.1"/></svg><svg width="688" height="391" style="left:0;top:0"><circle cx="23" cy="353.3" r="13" fill="#5A7EA0"/><circle cx="23" cy="353.3" r="11" fill="none" stroke="#E8EEF3" stroke-width="0.9"/><text x="23" y="360" text-anchor="middle" font-family="Liberation Sans" font-weight="bold" font-size="12" fill="#fff">1</text></svg></div><div class="a th" style="left:38.5px;top:193.5px;width:182.5px;height:103.8px;overflow:hidden"><div class="a" style="left:0;top:0;width:688px;height:391px;transform:scale(0.2653);transform-origin:0 0;background:#F2F2F2"><div class="a" style="left:0;top:13px;width:688px;height:391px"><svg width="688" height="391" style="left:0;top:0"><defs><filter id="mrb" x="0" y="0" width="100%%" height="100%%"><feTurbulence type="fractalNoise" baseFrequency="0.08" numOctaves="3" seed="4"/><feColorMatrix values="0 0 0 0 1  0 0 0 0 1  0 0 0 0 1  0 0 0 -1.6 1.25"/></filter></defs><rect x="551" y="-20" width="137" height="431" fill="#D4D4D4"/><rect x="551" y="-20" width="137" height="431" fill="#fff" filter="url(#mrb)" opacity="0.55"/><g fill="#F4F4F4"><circle cx="595.7" cy="52.0" r="0.5"/><circle cx="561.4" cy="27.3" r="0.7"/><circle cx="663.6" cy="40.9" r="0.6"/><circle cx="667.9" cy="109.0" r="0.5"/><circle cx="567.9" cy="116.8" r="1.0"/><circle cx="576.4" cy="229.0" r="0.8"/><circle cx="560.0" cy="74.6" r="0.9"/><circle cx="613.2" cy="113.2" r="0.9"/><circle cx="670.1" cy="289.8" r="0.6"/><circle cx="684.3" cy="38.5" r="0.7"/><circle cx="654.2" cy="52.5" r="0.7"/><circle cx="557.3" cy="264.6" r="0.9"/><circle cx="613.6" cy="335.2" r="0.7"/><circle cx="641.7" cy="14.9" r="0.9"/><circle cx="686.1" cy="327.8" r="0.6"/><circle cx="560.0" cy="305.7" r="0.5"/><circle cx="585.4" cy="150.7" r="0.5"/><circle cx="612.6" cy="215.8" r="1.0"/><circle cx="668.6" cy="104.4" r="0.7"/><circle cx="600.4" cy="353.4" r="0.5"/><circle cx="575.8" cy="85.3" r="0.6"/><circle cx="552.6" cy="162.2" r="0.7"/><circle cx="628.5" cy="381.7" r="0.8"/><circle cx="673.4" cy="310.6" r="1.0"/><circle cx="659.7" cy="151.3" r="0.7"/><circle cx="566.0" cy="250.7" r="0.4"/><circle cx="561.1" cy="75.8" r="0.5"/><circle cx="572.4" cy="31.7" r="0.7"/><circle cx="555.4" cy="349.4" r="0.8"/><circle cx="572.1" cy="93.7" r="0.6"/><circle cx="601.2" cy="40.5" r="1.1"/><circle cx="565.8" cy="130.8" r="0.6"/><circle cx="663.9" cy="56.4" r="0.4"/><circle cx="680.4" cy="207.1" r="0.5"/><circle cx="684.1" cy="344.8" r="0.9"/><circle cx="656.2" cy="208.9" r="0.9"/><circle cx="596.5" cy="81.7" r="1.1"/><circle cx="667.1" cy="321.3" r="1.0"/><circle cx="589.7" cy="96.5" r="1.1"/><circle cx="612.4" cy="375.1" r="1.1"/><circle cx="578.6" cy="74.0" r="0.8"/><circle cx="673.5" cy="335.4" r="0.7"/><circle cx="641.2" cy="363.9" r="0.9"/><circle cx="616.5" cy="63.4" r="0.6"/><circle cx="660.1" cy="389.4" r="0.7"/><circle cx="606.2" cy="379.1" r="0.5"/><circle cx="569.2" cy="52.1" r="1.0"/><circle cx="660.9" cy="50.1" r="1.0"/><circle cx="684.3" cy="260.1" r="0.6"/><circle cx="683.1" cy="257.0" r="0.8"/><circle cx="678.0" cy="168.3" r="1.0"/><circle cx="663.5" cy="76.7" r="0.6"/><circle cx="674.9" cy="135.4" r="0.7"/><circle cx="675.9" cy="196.2" r="0.8"/><circle cx="576.7" cy="-8.4" r="1.0"/><circle cx="575.3" cy="184.6" r="0.9"/><circle cx="656.3" cy="198.7" r="0.8"/><circle cx="654.6" cy="365.0" r="0.7"/><circle cx="616.5" cy="377.0" r="1.0"/><circle cx="679.2" cy="96.7" r="0.8"/><circle cx="679.3" cy="335.2" r="0.5"/><circle cx="568.4" cy="171.7" r="0.5"/><circle cx="584.5" cy="20.1" r="0.9"/><circle cx="673.1" cy="53.5" r="0.9"/><circle cx="641.1" cy="48.8" r="1.1"/><circle cx="581.6" cy="381.5" r="0.7"/><circle cx="617.8" cy="396.8" r="0.5"/><circle cx="578.4" cy="120.9" r="0.9"/><circle cx="554.6" cy="217.7" r="0.7"/><circle cx="554.4" cy="126.2" r="0.8"/><circle cx="621.2" cy="16.4" r="1.0"/><circle cx="683.2" cy="33.1" r="0.6"/><circle cx="557.3" cy="310.2" r="0.6"/><circle cx="569.5" cy="163.5" r="1.0"/><circle cx="662.6" cy="96.3" r="0.5"/><circle cx="676.1" cy="224.5" r="0.9"/><circle cx="564.1" cy="13.6" r="0.9"/><circle cx="609.4" cy="19.8" r="0.8"/><circle cx="660.2" cy="24.4" r="1.0"/><circle cx="561.0" cy="344.6" r="0.7"/><circle cx="597.8" cy="217.3" r="0.6"/><circle cx="569.4" cy="206.6" r="0.6"/><circle cx="566.8" cy="56.4" r="0.4"/><circle cx="579.2" cy="118.2" r="0.6"/><circle cx="654.5" cy="109.2" r="0.8"/><circle cx="576.0" cy="132.6" r="0.4"/><circle cx="585.8" cy="-3.7" r="0.8"/><circle cx="577.6" cy="185.1" r="1.1"/><circle cx="566.3" cy="326.6" r="0.7"/><circle cx="620.4" cy="272.7" r="0.6"/><circle cx="664.4" cy="280.5" r="0.8"/><circle cx="569.5" cy="19.1" r="0.9"/><circle cx="665.6" cy="347.8" r="0.9"/><circle cx="587.5" cy="385.3" r="0.8"/><circle cx="564.1" cy="154.2" r="0.4"/><circle cx="555.0" cy="115.0" r="0.6"/><circle cx="631.1" cy="207.5" r="0.9"/></g><rect x="577.8" y="-20" width="2" height="431" fill="#737373"/><rect x="581.8" y="-20" width="2" height="431" fill="#FAFAFA"/><rect x="654" y="-20" width="2" height="431" fill="#737373"/><rect x="657.8" y="-20" width="2" height="431" fill="#FAFAFA"/><path d="M595.3 -85.3 H646.7 M646.7 -85.3 V-30.9 M595.3 -68.2 V-20.8 M592.8 -72.2 H634.1 M634.1 -72.2 V-43.5 M608.4 -59.1 V-32.9 M608.4 -32.9 H643.7 M605.4 -59.1 H621.5 M621.5 -59.1 V-46.0 M621.5 -46.0 H630.6 M595.3 -20.7 H646.7 M646.7 -20.7 V33.7 M595.3 -3.6 V43.8 M592.8 -7.6 H634.1 M634.1 -7.6 V21.1 M608.4 5.5 V31.7 M608.4 31.7 H643.7 M605.4 5.5 H621.5 M621.5 5.5 V18.6 M621.5 18.6 H630.6 M595.3 44.0 H646.7 M646.7 44.0 V98.4 M595.3 61.1 V108.5 M592.8 57.1 H634.1 M634.1 57.1 V85.8 M608.4 70.2 V96.4 M608.4 96.4 H643.7 M605.4 70.2 H621.5 M621.5 70.2 V83.3 M621.5 83.3 H630.6 M595.3 108.7 H646.7 M646.7 108.7 V163.1 M595.3 125.8 V173.2 M592.8 121.8 H634.1 M634.1 121.8 V150.4 M608.4 134.8 V161.1 M608.4 161.1 H643.7 M605.4 134.8 H621.5 M621.5 134.8 V147.9 M621.5 147.9 H630.6 M595.3 173.3 H646.7 M646.7 173.3 V227.7 M595.3 190.4 V237.8 M592.8 186.4 H634.1 M634.1 186.4 V215.1 M608.4 199.5 V225.7 M608.4 225.7 H643.7 M605.4 199.5 H621.5 M621.5 199.5 V212.6 M621.5 212.6 H630.6 M595.3 238.0 H646.7 M646.7 238.0 V292.4 M595.3 255.1 V302.5 M592.8 251.1 H634.1 M634.1 251.1 V279.8 M608.4 264.2 V290.4 M608.4 290.4 H643.7 M605.4 264.2 H621.5 M621.5 264.2 V277.2 M621.5 277.2 H630.6 M595.3 302.6 H646.7 M646.7 302.6 V357.0 M595.3 319.7 V367.1 M592.8 315.7 H634.1 M634.1 315.7 V344.4 M608.4 328.8 V355.0 M608.4 355.0 H643.7 M605.4 328.8 H621.5 M621.5 328.8 V341.9 M621.5 341.9 H630.6 M595.3 367.2 H646.7 M646.7 367.2 V421.6 M595.3 384.4 V431.8 M592.8 380.4 H634.1 M634.1 380.4 V409.1 M608.4 393.4 V419.6 M608.4 419.6 H643.7 M605.4 393.4 H621.5 M621.5 393.4 V406.6 M621.5 406.6 H630.6 M595.3 431.9 H646.7 M646.7 431.9 V486.3 M595.3 449.0 V496.4 M592.8 445.0 H634.1 M634.1 445.0 V473.7 M608.4 458.1 V484.3 M608.4 484.3 H643.7 M605.4 458.1 H621.5 M621.5 458.1 V471.2 M621.5 471.2 H630.6 M595.3 496.6 H646.7 M646.7 496.6 V551.0 M595.3 513.7 V561.1 M592.8 509.7 H634.1 M634.1 509.7 V538.4 M608.4 522.8 V549.0 M608.4 549.0 H643.7 M605.4 522.8 H621.5 M621.5 522.8 V535.9 M621.5 535.9 H630.6" fill="none" stroke="#FAFAFA" stroke-width="2"/><path d="M591.1 -80.5 H642.5 M642.5 -80.5 V-34.9 M591.1 -72.4 V-15.8 M597.4 -67.7 H629.6 M629.6 -67.7 V-47.5 M603.9 -59.6 V-28.9 M603.9 -28.9 H647.2 M609.9 -54.6 H617.0 M617.0 -54.6 V-41.5 M617.0 -41.5 H634.6 M591.1 -15.8 H642.5 M642.5 -15.8 V29.7 M591.1 -7.8 V48.8 M597.4 -3.1 H629.6 M629.6 -3.1 V17.1 M603.9 5.0 V35.7 M603.9 35.7 H647.2 M609.9 10.0 H617.0 M617.0 10.0 V23.1 M617.0 23.1 H634.6 M591.1 48.9 H642.5 M642.5 48.9 V94.4 M591.1 56.9 V113.5 M597.4 61.6 H629.6 M629.6 61.6 V81.8 M603.9 69.7 V100.4 M603.9 100.4 H647.2 M609.9 74.7 H617.0 M617.0 74.7 V87.8 M617.0 87.8 H634.6 M591.1 113.5 H642.5 M642.5 113.5 V159.1 M591.1 121.6 V178.2 M597.4 126.2 H629.6 M629.6 126.2 V146.4 M603.9 134.3 V165.1 M603.9 165.1 H647.2 M609.9 139.4 H617.0 M617.0 139.4 V152.4 M617.0 152.4 H634.6 M591.1 178.2 H642.5 M642.5 178.2 V223.7 M591.1 186.2 V242.8 M597.4 190.9 H629.6 M629.6 190.9 V211.1 M603.9 199.0 V229.7 M603.9 229.7 H647.2 M609.9 204.0 H617.0 M617.0 204.0 V217.1 M617.0 217.1 H634.6 M591.1 242.8 H642.5 M642.5 242.8 V288.4 M591.1 250.9 V307.5 M597.4 255.6 H629.6 M629.6 255.6 V275.8 M603.9 263.7 V294.4 M603.9 294.4 H647.2 M609.9 268.7 H617.0 M617.0 268.7 V281.8 M617.0 281.8 H634.6 M591.1 307.5 H642.5 M642.5 307.5 V353.0 M591.1 315.5 V372.1 M597.4 320.2 H629.6 M629.6 320.2 V340.4 M603.9 328.3 V359.0 M603.9 359.0 H647.2 M609.9 333.3 H617.0 M617.0 333.3 V346.4 M617.0 346.4 H634.6 M591.1 372.1 H642.5 M642.5 372.1 V417.6 M591.1 380.1 V436.8 M597.4 384.9 H629.6 M629.6 384.9 V405.1 M603.9 392.9 V423.6 M603.9 423.6 H647.2 M609.9 397.9 H617.0 M617.0 397.9 V411.1 M617.0 411.1 H634.6 M591.1 436.8 H642.5 M642.5 436.8 V482.3 M591.1 444.8 V501.4 M597.4 449.5 H629.6 M629.6 449.5 V469.7 M603.9 457.6 V488.3 M603.9 488.3 H647.2 M609.9 462.6 H617.0 M617.0 462.6 V475.7 M617.0 475.7 H634.6 M591.1 501.4 H642.5 M642.5 501.4 V547.0 M591.1 509.5 V566.1 M597.4 514.2 H629.6 M629.6 514.2 V534.4 M603.9 522.3 V553.0 M603.9 553.0 H647.2 M609.9 527.3 H617.0 M617.0 527.3 V540.4 M617.0 540.4 H634.6" fill="none" stroke="#737373" stroke-width="2"/></svg><svg width="688" height="391" style="left:0;top:0"><rect x="82.8" y="131.8" width="3.1" height="3.2" fill="#4F86C0"/><rect x="82.8" y="148.9" width="3.1" height="3.2" fill="#4F86C0"/><rect x="82.8" y="167.0" width="3.1" height="3.2" fill="#4F86C0"/><rect x="82.8" y="184.5" width="3.1" height="3.2" fill="#4F86C0"/><rect x="82.8" y="201.8" width="3.1" height="3.2" fill="#4F86C0"/><rect x="82.8" y="219.9" width="3.1" height="3.2" fill="#4F86C0"/><rect x="320.7" y="150.2" width="3.1" height="3.2" fill="#4F86C0"/><rect x="320.7" y="167.0" width="3.1" height="3.2" fill="#4F86C0"/><rect x="320.7" y="185.4" width="3.1" height="3.2" fill="#4F86C0"/><rect x="320.7" y="202.6" width="3.1" height="3.2" fill="#4F86C0"/><rect x="320.7" y="220.2" width="3.1" height="3.2" fill="#4F86C0"/><rect x="320.7" y="238.3" width="3.1" height="3.2" fill="#4F86C0"/><rect x="320.7" y="255.6" width="3.1" height="3.2" fill="#4F86C0"/><rect x="320.7" y="273.0" width="3.1" height="3.2" fill="#4F86C0"/><rect x="320.7" y="291.0" width="3.1" height="3.2" fill="#4F86C0"/></svg><div class="t" style="left:65.81px;top:37.22px;font-size:37.692px;line-height:37.692px;color:#141414;font-weight:bold;font-family:'Liberation Serif', serif;transform:scaleX(1.0865);">Corpus Aristotelicum I</div>
<div class="t" style="left:92.60px;top:110.41px;font-size:13.043px;line-height:13.043px;color:#1A1A1A;transform:scaleX(0.9829);-webkit-text-stroke:0.2px #1A1A1A;">Organon</div>
<div class="t" style="left:92.60px;top:127.60px;font-size:11.884px;line-height:11.884px;color:#1A1A1A;transform:scaleX(1.0258);-webkit-text-stroke:0.2px #1A1A1A;">Kategorien</div>
<div class="t" style="left:92.60px;top:144.70px;font-size:11.884px;line-height:11.884px;color:#1A1A1A;transform:scaleX(1.0623);-webkit-text-stroke:0.2px #1A1A1A;">De interpretatione</div>
<div class="t" style="left:92.60px;top:162.80px;font-size:11.884px;line-height:11.884px;color:#1A1A1A;transform:scaleX(1.0322);-webkit-text-stroke:0.2px #1A1A1A;">Analytica priora A-B</div>
<div class="t" style="left:92.60px;top:180.30px;font-size:11.884px;line-height:11.884px;color:#1A1A1A;transform:scaleX(1.0309);-webkit-text-stroke:0.2px #1A1A1A;">Analytica posteriora A-B</div>
<div class="t" style="left:92.60px;top:197.60px;font-size:11.884px;line-height:11.884px;color:#1A1A1A;transform:scaleX(0.9943);-webkit-text-stroke:0.2px #1A1A1A;">Topik A-Θ</div>
<div class="t" style="left:92.60px;top:215.70px;font-size:11.884px;line-height:11.884px;color:#1A1A1A;transform:scaleX(1.0033);-webkit-text-stroke:0.2px #1A1A1A;">Sophistische Widerlegungen</div>
<div class="t" style="left:91.61px;top:233.81px;font-size:13.043px;line-height:13.043px;color:#1A1A1A;transform:scaleX(0.9901);-webkit-text-stroke:0.2px #1A1A1A;">Physik A-Θ</div>
<div class="t" style="left:91.58px;top:252.21px;font-size:13.043px;line-height:13.043px;color:#1A1A1A;transform:scaleX(1.0213);-webkit-text-stroke:0.2px #1A1A1A;">De caelo A-Δ</div>
<div class="t" style="left:91.53px;top:270.61px;font-size:13.043px;line-height:13.043px;color:#1A1A1A;transform:scaleX(1.0680);-webkit-text-stroke:0.2px #1A1A1A;">De generatione et corruptione A-B</div>
<div class="t" style="left:91.55px;top:287.91px;font-size:13.043px;line-height:13.043px;color:#1A1A1A;transform:scaleX(1.0460);-webkit-text-stroke:0.2px #1A1A1A;">Meteorologica A-Δ</div>
<div class="t" style="left:91.56px;top:306.01px;font-size:13.043px;line-height:13.043px;color:#1A1A1A;transform:scaleX(1.0352);-webkit-text-stroke:0.2px #1A1A1A;">De mundo ad Alexandrum</div>
<div class="t" style="left:329.38px;top:110.41px;font-size:13.043px;line-height:13.043px;color:#1A1A1A;transform:scaleX(1.0239);-webkit-text-stroke:0.2px #1A1A1A;">De anima A-Γ</div>
<div class="t" style="left:329.36px;top:128.41px;font-size:13.043px;line-height:13.043px;color:#1A1A1A;transform:scaleX(1.0423);-webkit-text-stroke:0.2px #1A1A1A;">Parva naturalia</div>
<div class="t" style="left:330.40px;top:146.00px;font-size:11.884px;line-height:11.884px;color:#1A1A1A;-webkit-text-stroke:0.2px #1A1A1A;">De sensu et sensibilibus</div>
<div class="t" style="left:330.40px;top:162.80px;font-size:11.884px;line-height:11.884px;color:#1A1A1A;transform:scaleX(1.0401);-webkit-text-stroke:0.2px #1A1A1A;">De memoria et reminiscentia</div>
<div class="t" style="left:330.40px;top:181.20px;font-size:11.884px;line-height:11.884px;color:#1A1A1A;transform:scaleX(1.0217);-webkit-text-stroke:0.2px #1A1A1A;">De somno et vigilia</div>
<div class="t" style="left:330.40px;top:198.40px;font-size:11.884px;line-height:11.884px;color:#1A1A1A;transform:scaleX(0.9801);-webkit-text-stroke:0.2px #1A1A1A;">De insomnis</div>
<div class="t" style="left:330.40px;top:216.00px;font-size:11.884px;line-height:11.884px;color:#1A1A1A;transform:scaleX(1.0231);-webkit-text-stroke:0.2px #1A1A1A;">De divinatione per somnum</div>
<div class="t" style="left:330.40px;top:234.10px;font-size:11.884px;line-height:11.884px;color:#1A1A1A;transform:scaleX(1.0711);-webkit-text-stroke:0.2px #1A1A1A;">De longitudine et brevitate vitae</div>
<div class="t" style="left:330.40px;top:251.40px;font-size:11.884px;line-height:11.884px;color:#1A1A1A;transform:scaleX(1.0558);-webkit-text-stroke:0.2px #1A1A1A;">De juventute et senectute</div>
<div class="t" style="left:330.40px;top:268.80px;font-size:11.884px;line-height:11.884px;color:#1A1A1A;transform:scaleX(1.0640);-webkit-text-stroke:0.2px #1A1A1A;">De vita et morte</div>
<div class="t" style="left:330.40px;top:286.80px;font-size:11.884px;line-height:11.884px;color:#1A1A1A;transform:scaleX(1.0257);-webkit-text-stroke:0.2px #1A1A1A;">De respiratione</div>
<div class="t" style="left:66.90px;top:112.51px;font-size:10.580px;line-height:10.580px;color:#4F86C0;font-weight:bold;transform:scaleX(1.0244);">1.</div>
<div class="t" style="left:66.90px;top:235.91px;font-size:10.580px;line-height:10.580px;color:#4F86C0;font-weight:bold;transform:scaleX(1.0244);">2.</div>
<div class="t" style="left:66.90px;top:254.31px;font-size:10.580px;line-height:10.580px;color:#4F86C0;font-weight:bold;transform:scaleX(1.0244);">3.</div>
<div class="t" style="left:66.90px;top:272.71px;font-size:10.580px;line-height:10.580px;color:#4F86C0;font-weight:bold;transform:scaleX(1.0244);">4.</div>
<div class="t" style="left:66.90px;top:290.01px;font-size:10.580px;line-height:10.580px;color:#4F86C0;font-weight:bold;transform:scaleX(1.0244);">5.</div>
<div class="t" style="left:66.90px;top:308.11px;font-size:10.580px;line-height:10.580px;color:#4F86C0;font-weight:bold;transform:scaleX(1.0244);">6.</div>
<div class="t" style="left:304.60px;top:112.51px;font-size:10.580px;line-height:10.580px;color:#4F86C0;font-weight:bold;transform:scaleX(1.0695);">7.</div>
<div class="t" style="left:304.60px;top:130.51px;font-size:10.580px;line-height:10.580px;color:#4F86C0;font-weight:bold;transform:scaleX(1.0695);">8.</div></div><svg width="688" height="391" style="left:0;top:0"><circle cx="23" cy="368" r="10" fill="#4D6F91"/></svg></div></div><div class="a th" style="left:38.5px;top:319.5px;width:182.5px;height:103.8px;overflow:hidden"><div class="a" style="left:0;top:0;width:688px;height:391px;transform:scale(0.2653);transform-origin:0 0;background:#F2F2F2"><div class="a" style="left:0;top:13px;width:688px;height:391px"><svg width="688" height="391" style="left:0;top:0"><defs><filter id="mrb" x="0" y="0" width="100%%" height="100%%"><feTurbulence type="fractalNoise" baseFrequency="0.08" numOctaves="3" seed="4"/><feColorMatrix values="0 0 0 0 1  0 0 0 0 1  0 0 0 0 1  0 0 0 -1.6 1.25"/></filter></defs><rect x="551" y="-20" width="137" height="431" fill="#D4D4D4"/><rect x="551" y="-20" width="137" height="431" fill="#fff" filter="url(#mrb)" opacity="0.55"/><g fill="#F4F4F4"><circle cx="595.7" cy="52.0" r="0.5"/><circle cx="561.4" cy="27.3" r="0.7"/><circle cx="663.6" cy="40.9" r="0.6"/><circle cx="667.9" cy="109.0" r="0.5"/><circle cx="567.9" cy="116.8" r="1.0"/><circle cx="576.4" cy="229.0" r="0.8"/><circle cx="560.0" cy="74.6" r="0.9"/><circle cx="613.2" cy="113.2" r="0.9"/><circle cx="670.1" cy="289.8" r="0.6"/><circle cx="684.3" cy="38.5" r="0.7"/><circle cx="654.2" cy="52.5" r="0.7"/><circle cx="557.3" cy="264.6" r="0.9"/><circle cx="613.6" cy="335.2" r="0.7"/><circle cx="641.7" cy="14.9" r="0.9"/><circle cx="686.1" cy="327.8" r="0.6"/><circle cx="560.0" cy="305.7" r="0.5"/><circle cx="585.4" cy="150.7" r="0.5"/><circle cx="612.6" cy="215.8" r="1.0"/><circle cx="668.6" cy="104.4" r="0.7"/><circle cx="600.4" cy="353.4" r="0.5"/><circle cx="575.8" cy="85.3" r="0.6"/><circle cx="552.6" cy="162.2" r="0.7"/><circle cx="628.5" cy="381.7" r="0.8"/><circle cx="673.4" cy="310.6" r="1.0"/><circle cx="659.7" cy="151.3" r="0.7"/><circle cx="566.0" cy="250.7" r="0.4"/><circle cx="561.1" cy="75.8" r="0.5"/><circle cx="572.4" cy="31.7" r="0.7"/><circle cx="555.4" cy="349.4" r="0.8"/><circle cx="572.1" cy="93.7" r="0.6"/><circle cx="601.2" cy="40.5" r="1.1"/><circle cx="565.8" cy="130.8" r="0.6"/><circle cx="663.9" cy="56.4" r="0.4"/><circle cx="680.4" cy="207.1" r="0.5"/><circle cx="684.1" cy="344.8" r="0.9"/><circle cx="656.2" cy="208.9" r="0.9"/><circle cx="596.5" cy="81.7" r="1.1"/><circle cx="667.1" cy="321.3" r="1.0"/><circle cx="589.7" cy="96.5" r="1.1"/><circle cx="612.4" cy="375.1" r="1.1"/><circle cx="578.6" cy="74.0" r="0.8"/><circle cx="673.5" cy="335.4" r="0.7"/><circle cx="641.2" cy="363.9" r="0.9"/><circle cx="616.5" cy="63.4" r="0.6"/><circle cx="660.1" cy="389.4" r="0.7"/><circle cx="606.2" cy="379.1" r="0.5"/><circle cx="569.2" cy="52.1" r="1.0"/><circle cx="660.9" cy="50.1" r="1.0"/><circle cx="684.3" cy="260.1" r="0.6"/><circle cx="683.1" cy="257.0" r="0.8"/><circle cx="678.0" cy="168.3" r="1.0"/><circle cx="663.5" cy="76.7" r="0.6"/><circle cx="674.9" cy="135.4" r="0.7"/><circle cx="675.9" cy="196.2" r="0.8"/><circle cx="576.7" cy="-8.4" r="1.0"/><circle cx="575.3" cy="184.6" r="0.9"/><circle cx="656.3" cy="198.7" r="0.8"/><circle cx="654.6" cy="365.0" r="0.7"/><circle cx="616.5" cy="377.0" r="1.0"/><circle cx="679.2" cy="96.7" r="0.8"/><circle cx="679.3" cy="335.2" r="0.5"/><circle cx="568.4" cy="171.7" r="0.5"/><circle cx="584.5" cy="20.1" r="0.9"/><circle cx="673.1" cy="53.5" r="0.9"/><circle cx="641.1" cy="48.8" r="1.1"/><circle cx="581.6" cy="381.5" r="0.7"/><circle cx="617.8" cy="396.8" r="0.5"/><circle cx="578.4" cy="120.9" r="0.9"/><circle cx="554.6" cy="217.7" r="0.7"/><circle cx="554.4" cy="126.2" r="0.8"/><circle cx="621.2" cy="16.4" r="1.0"/><circle cx="683.2" cy="33.1" r="0.6"/><circle cx="557.3" cy="310.2" r="0.6"/><circle cx="569.5" cy="163.5" r="1.0"/><circle cx="662.6" cy="96.3" r="0.5"/><circle cx="676.1" cy="224.5" r="0.9"/><circle cx="564.1" cy="13.6" r="0.9"/><circle cx="609.4" cy="19.8" r="0.8"/><circle cx="660.2" cy="24.4" r="1.0"/><circle cx="561.0" cy="344.6" r="0.7"/><circle cx="597.8" cy="217.3" r="0.6"/><circle cx="569.4" cy="206.6" r="0.6"/><circle cx="566.8" cy="56.4" r="0.4"/><circle cx="579.2" cy="118.2" r="0.6"/><circle cx="654.5" cy="109.2" r="0.8"/><circle cx="576.0" cy="132.6" r="0.4"/><circle cx="585.8" cy="-3.7" r="0.8"/><circle cx="577.6" cy="185.1" r="1.1"/><circle cx="566.3" cy="326.6" r="0.7"/><circle cx="620.4" cy="272.7" r="0.6"/><circle cx="664.4" cy="280.5" r="0.8"/><circle cx="569.5" cy="19.1" r="0.9"/><circle cx="665.6" cy="347.8" r="0.9"/><circle cx="587.5" cy="385.3" r="0.8"/><circle cx="564.1" cy="154.2" r="0.4"/><circle cx="555.0" cy="115.0" r="0.6"/><circle cx="631.1" cy="207.5" r="0.9"/></g><rect x="577.8" y="-20" width="2" height="431" fill="#737373"/><rect x="581.8" y="-20" width="2" height="431" fill="#FAFAFA"/><rect x="654" y="-20" width="2" height="431" fill="#737373"/><rect x="657.8" y="-20" width="2" height="431" fill="#FAFAFA"/><path d="M595.3 -85.3 H646.7 M646.7 -85.3 V-30.9 M595.3 -68.2 V-20.8 M592.8 -72.2 H634.1 M634.1 -72.2 V-43.5 M608.4 -59.1 V-32.9 M608.4 -32.9 H643.7 M605.4 -59.1 H621.5 M621.5 -59.1 V-46.0 M621.5 -46.0 H630.6 M595.3 -20.7 H646.7 M646.7 -20.7 V33.7 M595.3 -3.6 V43.8 M592.8 -7.6 H634.1 M634.1 -7.6 V21.1 M608.4 5.5 V31.7 M608.4 31.7 H643.7 M605.4 5.5 H621.5 M621.5 5.5 V18.6 M621.5 18.6 H630.6 M595.3 44.0 H646.7 M646.7 44.0 V98.4 M595.3 61.1 V108.5 M592.8 57.1 H634.1 M634.1 57.1 V85.8 M608.4 70.2 V96.4 M608.4 96.4 H643.7 M605.4 70.2 H621.5 M621.5 70.2 V83.3 M621.5 83.3 H630.6 M595.3 108.7 H646.7 M646.7 108.7 V163.1 M595.3 125.8 V173.2 M592.8 121.8 H634.1 M634.1 121.8 V150.4 M608.4 134.8 V161.1 M608.4 161.1 H643.7 M605.4 134.8 H621.5 M621.5 134.8 V147.9 M621.5 147.9 H630.6 M595.3 173.3 H646.7 M646.7 173.3 V227.7 M595.3 190.4 V237.8 M592.8 186.4 H634.1 M634.1 186.4 V215.1 M608.4 199.5 V225.7 M608.4 225.7 H643.7 M605.4 199.5 H621.5 M621.5 199.5 V212.6 M621.5 212.6 H630.6 M595.3 238.0 H646.7 M646.7 238.0 V292.4 M595.3 255.1 V302.5 M592.8 251.1 H634.1 M634.1 251.1 V279.8 M608.4 264.2 V290.4 M608.4 290.4 H643.7 M605.4 264.2 H621.5 M621.5 264.2 V277.2 M621.5 277.2 H630.6 M595.3 302.6 H646.7 M646.7 302.6 V357.0 M595.3 319.7 V367.1 M592.8 315.7 H634.1 M634.1 315.7 V344.4 M608.4 328.8 V355.0 M608.4 355.0 H643.7 M605.4 328.8 H621.5 M621.5 328.8 V341.9 M621.5 341.9 H630.6 M595.3 367.2 H646.7 M646.7 367.2 V421.6 M595.3 384.4 V431.8 M592.8 380.4 H634.1 M634.1 380.4 V409.1 M608.4 393.4 V419.6 M608.4 419.6 H643.7 M605.4 393.4 H621.5 M621.5 393.4 V406.6 M621.5 406.6 H630.6 M595.3 431.9 H646.7 M646.7 431.9 V486.3 M595.3 449.0 V496.4 M592.8 445.0 H634.1 M634.1 445.0 V473.7 M608.4 458.1 V484.3 M608.4 484.3 H643.7 M605.4 458.1 H621.5 M621.5 458.1 V471.2 M621.5 471.2 H630.6 M595.3 496.6 H646.7 M646.7 496.6 V551.0 M595.3 513.7 V561.1 M592.8 509.7 H634.1 M634.1 509.7 V538.4 M608.4 522.8 V549.0 M608.4 549.0 H643.7 M605.4 522.8 H621.5 M621.5 522.8 V535.9 M621.5 535.9 H630.6" fill="none" stroke="#FAFAFA" stroke-width="2"/><path d="M591.1 -80.5 H642.5 M642.5 -80.5 V-34.9 M591.1 -72.4 V-15.8 M597.4 -67.7 H629.6 M629.6 -67.7 V-47.5 M603.9 -59.6 V-28.9 M603.9 -28.9 H647.2 M609.9 -54.6 H617.0 M617.0 -54.6 V-41.5 M617.0 -41.5 H634.6 M591.1 -15.8 H642.5 M642.5 -15.8 V29.7 M591.1 -7.8 V48.8 M597.4 -3.1 H629.6 M629.6 -3.1 V17.1 M603.9 5.0 V35.7 M603.9 35.7 H647.2 M609.9 10.0 H617.0 M617.0 10.0 V23.1 M617.0 23.1 H634.6 M591.1 48.9 H642.5 M642.5 48.9 V94.4 M591.1 56.9 V113.5 M597.4 61.6 H629.6 M629.6 61.6 V81.8 M603.9 69.7 V100.4 M603.9 100.4 H647.2 M609.9 74.7 H617.0 M617.0 74.7 V87.8 M617.0 87.8 H634.6 M591.1 113.5 H642.5 M642.5 113.5 V159.1 M591.1 121.6 V178.2 M597.4 126.2 H629.6 M629.6 126.2 V146.4 M603.9 134.3 V165.1 M603.9 165.1 H647.2 M609.9 139.4 H617.0 M617.0 139.4 V152.4 M617.0 152.4 H634.6 M591.1 178.2 H642.5 M642.5 178.2 V223.7 M591.1 186.2 V242.8 M597.4 190.9 H629.6 M629.6 190.9 V211.1 M603.9 199.0 V229.7 M603.9 229.7 H647.2 M609.9 204.0 H617.0 M617.0 204.0 V217.1 M617.0 217.1 H634.6 M591.1 242.8 H642.5 M642.5 242.8 V288.4 M591.1 250.9 V307.5 M597.4 255.6 H629.6 M629.6 255.6 V275.8 M603.9 263.7 V294.4 M603.9 294.4 H647.2 M609.9 268.7 H617.0 M617.0 268.7 V281.8 M617.0 281.8 H634.6 M591.1 307.5 H642.5 M642.5 307.5 V353.0 M591.1 315.5 V372.1 M597.4 320.2 H629.6 M629.6 320.2 V340.4 M603.9 328.3 V359.0 M603.9 359.0 H647.2 M609.9 333.3 H617.0 M617.0 333.3 V346.4 M617.0 346.4 H634.6 M591.1 372.1 H642.5 M642.5 372.1 V417.6 M591.1 380.1 V436.8 M597.4 384.9 H629.6 M629.6 384.9 V405.1 M603.9 392.9 V423.6 M603.9 423.6 H647.2 M609.9 397.9 H617.0 M617.0 397.9 V411.1 M617.0 411.1 H634.6 M591.1 436.8 H642.5 M642.5 436.8 V482.3 M591.1 444.8 V501.4 M597.4 449.5 H629.6 M629.6 449.5 V469.7 M603.9 457.6 V488.3 M603.9 488.3 H647.2 M609.9 462.6 H617.0 M617.0 462.6 V475.7 M617.0 475.7 H634.6 M591.1 501.4 H642.5 M642.5 501.4 V547.0 M591.1 509.5 V566.1 M597.4 514.2 H629.6 M629.6 514.2 V534.4 M603.9 522.3 V553.0 M603.9 553.0 H647.2 M609.9 527.3 H617.0 M617.0 527.3 V540.4 M617.0 540.4 H634.6" fill="none" stroke="#737373" stroke-width="2"/></svg><div class="t" style="left:67px;top:38px;font:bold 37.7px/37.7px 'Liberation Serif', serif;color:#141414">Corpus Aristotelicum II</div><div class="t" style="left:67px;top:112.0px;font-size:12px;line-height:12px;color:#4F86C0">9.</div><div class="t" style="left:91px;top:112.0px;font-size:12px;line-height:12px;color:#1A1A1A">De spiritu</div><div class="t" style="left:67px;top:128.6px;font-size:12px;line-height:12px;color:#4F86C0">10.</div><div class="t" style="left:91px;top:128.6px;font-size:12px;line-height:12px;color:#1A1A1A">Historia animalium A-K</div><div class="t" style="left:67px;top:145.2px;font-size:12px;line-height:12px;color:#4F86C0">11.</div><div class="t" style="left:91px;top:145.2px;font-size:12px;line-height:12px;color:#1A1A1A">De partibus animalium A-Δ</div><div class="t" style="left:67px;top:161.8px;font-size:12px;line-height:12px;color:#4F86C0">12.</div><div class="t" style="left:91px;top:161.8px;font-size:12px;line-height:12px;color:#1A1A1A">De motu animalium</div><div class="t" style="left:67px;top:178.4px;font-size:12px;line-height:12px;color:#4F86C0">13.</div><div class="t" style="left:91px;top:178.4px;font-size:12px;line-height:12px;color:#1A1A1A">De animalium incessu</div><div class="t" style="left:67px;top:195.0px;font-size:12px;line-height:12px;color:#4F86C0">14.</div><div class="t" style="left:91px;top:195.0px;font-size:12px;line-height:12px;color:#1A1A1A">De generatione animalium A-E</div><div class="t" style="left:67px;top:211.6px;font-size:12px;line-height:12px;color:#4F86C0">15.</div><div class="t" style="left:91px;top:211.6px;font-size:12px;line-height:12px;color:#1A1A1A">De coloribus</div><div class="t" style="left:67px;top:228.2px;font-size:12px;line-height:12px;color:#4F86C0">16.</div><div class="t" style="left:91px;top:228.2px;font-size:12px;line-height:12px;color:#1A1A1A">De audibilibus</div><div class="t" style="left:67px;top:244.8px;font-size:12px;line-height:12px;color:#4F86C0">17.</div><div class="t" style="left:91px;top:244.8px;font-size:12px;line-height:12px;color:#1A1A1A">Physiognomica</div><div class="t" style="left:67px;top:261.4px;font-size:12px;line-height:12px;color:#4F86C0">18.</div><div class="t" style="left:91px;top:261.4px;font-size:12px;line-height:12px;color:#1A1A1A">De plantis A-B</div><div class="t" style="left:67px;top:278.0px;font-size:12px;line-height:12px;color:#4F86C0">19.</div><div class="t" style="left:91px;top:278.0px;font-size:12px;line-height:12px;color:#1A1A1A">Mirabilium auscultationes</div><div class="t" style="left:67px;top:294.6px;font-size:12px;line-height:12px;color:#4F86C0">20.</div><div class="t" style="left:91px;top:294.6px;font-size:12px;line-height:12px;color:#1A1A1A">Mechanica</div><div class="t" style="left:67px;top:311.2px;font-size:12px;line-height:12px;color:#4F86C0">21.</div><div class="t" style="left:91px;top:311.2px;font-size:12px;line-height:12px;color:#1A1A1A">Problemata A-KA KB,ΛA-ΛH</div><div class="t" style="left:305px;top:112.0px;font-size:12px;line-height:12px;color:#4F86C0">22.</div><div class="t" style="left:329px;top:112.0px;font-size:12px;line-height:12px;color:#1A1A1A">De lineis insecabilibus</div><div class="t" style="left:305px;top:128.6px;font-size:12px;line-height:12px;color:#4F86C0">23.</div><div class="t" style="left:329px;top:128.6px;font-size:12px;line-height:12px;color:#1A1A1A">De ventorum situ et nominibus</div><div class="t" style="left:305px;top:145.2px;font-size:12px;line-height:12px;color:#4F86C0">24.</div><div class="t" style="left:329px;top:145.2px;font-size:12px;line-height:12px;color:#1A1A1A">De Melisso, Xenophane, Gorgia</div><div class="t" style="left:305px;top:161.8px;font-size:12px;line-height:12px;color:#4F86C0">25.</div><div class="t" style="left:329px;top:161.8px;font-size:12px;line-height:12px;color:#1A1A1A">Metaphysik A-N</div><div class="t" style="left:305px;top:178.4px;font-size:12px;line-height:12px;color:#4F86C0">26.</div><div class="t" style="left:329px;top:178.4px;font-size:12px;line-height:12px;color:#1A1A1A">Nikomachische Ethik A-K</div><div class="t" style="left:305px;top:195.0px;font-size:12px;line-height:12px;color:#4F86C0">27.</div><div class="t" style="left:329px;top:195.0px;font-size:12px;line-height:12px;color:#1A1A1A">Magna moralia A-B</div><div class="t" style="left:305px;top:211.6px;font-size:12px;line-height:12px;color:#4F86C0">28.</div><div class="t" style="left:329px;top:211.6px;font-size:12px;line-height:12px;color:#1A1A1A">Eudemische Ethik A-Θ</div><div class="t" style="left:305px;top:228.2px;font-size:12px;line-height:12px;color:#4F86C0">29.</div><div class="t" style="left:329px;top:228.2px;font-size:12px;line-height:12px;color:#1A1A1A">De virtutibus et vitiis</div><div class="t" style="left:305px;top:244.8px;font-size:12px;line-height:12px;color:#4F86C0">30.</div><div class="t" style="left:329px;top:244.8px;font-size:12px;line-height:12px;color:#1A1A1A">Politik A-Θ</div><div class="t" style="left:305px;top:261.4px;font-size:12px;line-height:12px;color:#4F86C0">31.</div><div class="t" style="left:329px;top:261.4px;font-size:12px;line-height:12px;color:#1A1A1A">Oeconomica A-Γ</div><div class="t" style="left:305px;top:278.0px;font-size:12px;line-height:12px;color:#4F86C0">32.</div><div class="t" style="left:329px;top:278.0px;font-size:12px;line-height:12px;color:#1A1A1A">Rhetorik A-Γ</div><div class="t" style="left:305px;top:294.6px;font-size:12px;line-height:12px;color:#4F86C0">33.</div><div class="t" style="left:329px;top:294.6px;font-size:12px;line-height:12px;color:#1A1A1A">Rhetorica ad Alexandrum</div><div class="t" style="left:305px;top:311.2px;font-size:12px;line-height:12px;color:#4F86C0">34.</div><div class="t" style="left:329px;top:311.2px;font-size:12px;line-height:12px;color:#1A1A1A">Poetik</div></div><svg width="688" height="391" style="left:0;top:0"><circle cx="23" cy="368" r="10" fill="#4D6F91"/></svg></div></div><div class="a th" style="left:38.5px;top:445.5px;width:182.5px;height:103.8px;overflow:hidden"><div class="a" style="left:0;top:0;width:688px;height:391px;transform:scale(0.2653);transform-origin:0 0;background:#F2F2F2"><div class="a" style="left:0;top:13px;width:688px;height:391px"><svg width="688" height="391" style="left:0;top:0"><defs><filter id="mrb" x="0" y="0" width="100%%" height="100%%"><feTurbulence type="fractalNoise" baseFrequency="0.08" numOctaves="3" seed="4"/><feColorMatrix values="0 0 0 0 1  0 0 0 0 1  0 0 0 0 1  0 0 0 -1.6 1.25"/></filter></defs><rect x="551" y="-20" width="137" height="431" fill="#D4D4D4"/><rect x="551" y="-20" width="137" height="431" fill="#fff" filter="url(#mrb)" opacity="0.55"/><g fill="#F4F4F4"><circle cx="595.7" cy="52.0" r="0.5"/><circle cx="561.4" cy="27.3" r="0.7"/><circle cx="663.6" cy="40.9" r="0.6"/><circle cx="667.9" cy="109.0" r="0.5"/><circle cx="567.9" cy="116.8" r="1.0"/><circle cx="576.4" cy="229.0" r="0.8"/><circle cx="560.0" cy="74.6" r="0.9"/><circle cx="613.2" cy="113.2" r="0.9"/><circle cx="670.1" cy="289.8" r="0.6"/><circle cx="684.3" cy="38.5" r="0.7"/><circle cx="654.2" cy="52.5" r="0.7"/><circle cx="557.3" cy="264.6" r="0.9"/><circle cx="613.6" cy="335.2" r="0.7"/><circle cx="641.7" cy="14.9" r="0.9"/><circle cx="686.1" cy="327.8" r="0.6"/><circle cx="560.0" cy="305.7" r="0.5"/><circle cx="585.4" cy="150.7" r="0.5"/><circle cx="612.6" cy="215.8" r="1.0"/><circle cx="668.6" cy="104.4" r="0.7"/><circle cx="600.4" cy="353.4" r="0.5"/><circle cx="575.8" cy="85.3" r="0.6"/><circle cx="552.6" cy="162.2" r="0.7"/><circle cx="628.5" cy="381.7" r="0.8"/><circle cx="673.4" cy="310.6" r="1.0"/><circle cx="659.7" cy="151.3" r="0.7"/><circle cx="566.0" cy="250.7" r="0.4"/><circle cx="561.1" cy="75.8" r="0.5"/><circle cx="572.4" cy="31.7" r="0.7"/><circle cx="555.4" cy="349.4" r="0.8"/><circle cx="572.1" cy="93.7" r="0.6"/><circle cx="601.2" cy="40.5" r="1.1"/><circle cx="565.8" cy="130.8" r="0.6"/><circle cx="663.9" cy="56.4" r="0.4"/><circle cx="680.4" cy="207.1" r="0.5"/><circle cx="684.1" cy="344.8" r="0.9"/><circle cx="656.2" cy="208.9" r="0.9"/><circle cx="596.5" cy="81.7" r="1.1"/><circle cx="667.1" cy="321.3" r="1.0"/><circle cx="589.7" cy="96.5" r="1.1"/><circle cx="612.4" cy="375.1" r="1.1"/><circle cx="578.6" cy="74.0" r="0.8"/><circle cx="673.5" cy="335.4" r="0.7"/><circle cx="641.2" cy="363.9" r="0.9"/><circle cx="616.5" cy="63.4" r="0.6"/><circle cx="660.1" cy="389.4" r="0.7"/><circle cx="606.2" cy="379.1" r="0.5"/><circle cx="569.2" cy="52.1" r="1.0"/><circle cx="660.9" cy="50.1" r="1.0"/><circle cx="684.3" cy="260.1" r="0.6"/><circle cx="683.1" cy="257.0" r="0.8"/><circle cx="678.0" cy="168.3" r="1.0"/><circle cx="663.5" cy="76.7" r="0.6"/><circle cx="674.9" cy="135.4" r="0.7"/><circle cx="675.9" cy="196.2" r="0.8"/><circle cx="576.7" cy="-8.4" r="1.0"/><circle cx="575.3" cy="184.6" r="0.9"/><circle cx="656.3" cy="198.7" r="0.8"/><circle cx="654.6" cy="365.0" r="0.7"/><circle cx="616.5" cy="377.0" r="1.0"/><circle cx="679.2" cy="96.7" r="0.8"/><circle cx="679.3" cy="335.2" r="0.5"/><circle cx="568.4" cy="171.7" r="0.5"/><circle cx="584.5" cy="20.1" r="0.9"/><circle cx="673.1" cy="53.5" r="0.9"/><circle cx="641.1" cy="48.8" r="1.1"/><circle cx="581.6" cy="381.5" r="0.7"/><circle cx="617.8" cy="396.8" r="0.5"/><circle cx="578.4" cy="120.9" r="0.9"/><circle cx="554.6" cy="217.7" r="0.7"/><circle cx="554.4" cy="126.2" r="0.8"/><circle cx="621.2" cy="16.4" r="1.0"/><circle cx="683.2" cy="33.1" r="0.6"/><circle cx="557.3" cy="310.2" r="0.6"/><circle cx="569.5" cy="163.5" r="1.0"/><circle cx="662.6" cy="96.3" r="0.5"/><circle cx="676.1" cy="224.5" r="0.9"/><circle cx="564.1" cy="13.6" r="0.9"/><circle cx="609.4" cy="19.8" r="0.8"/><circle cx="660.2" cy="24.4" r="1.0"/><circle cx="561.0" cy="344.6" r="0.7"/><circle cx="597.8" cy="217.3" r="0.6"/><circle cx="569.4" cy="206.6" r="0.6"/><circle cx="566.8" cy="56.4" r="0.4"/><circle cx="579.2" cy="118.2" r="0.6"/><circle cx="654.5" cy="109.2" r="0.8"/><circle cx="576.0" cy="132.6" r="0.4"/><circle cx="585.8" cy="-3.7" r="0.8"/><circle cx="577.6" cy="185.1" r="1.1"/><circle cx="566.3" cy="326.6" r="0.7"/><circle cx="620.4" cy="272.7" r="0.6"/><circle cx="664.4" cy="280.5" r="0.8"/><circle cx="569.5" cy="19.1" r="0.9"/><circle cx="665.6" cy="347.8" r="0.9"/><circle cx="587.5" cy="385.3" r="0.8"/><circle cx="564.1" cy="154.2" r="0.4"/><circle cx="555.0" cy="115.0" r="0.6"/><circle cx="631.1" cy="207.5" r="0.9"/></g><rect x="577.8" y="-20" width="2" height="431" fill="#737373"/><rect x="581.8" y="-20" width="2" height="431" fill="#FAFAFA"/><rect x="654" y="-20" width="2" height="431" fill="#737373"/><rect x="657.8" y="-20" width="2" height="431" fill="#FAFAFA"/><path d="M595.3 -85.3 H646.7 M646.7 -85.3 V-30.9 M595.3 -68.2 V-20.8 M592.8 -72.2 H634.1 M634.1 -72.2 V-43.5 M608.4 -59.1 V-32.9 M608.4 -32.9 H643.7 M605.4 -59.1 H621.5 M621.5 -59.1 V-46.0 M621.5 -46.0 H630.6 M595.3 -20.7 H646.7 M646.7 -20.7 V33.7 M595.3 -3.6 V43.8 M592.8 -7.6 H634.1 M634.1 -7.6 V21.1 M608.4 5.5 V31.7 M608.4 31.7 H643.7 M605.4 5.5 H621.5 M621.5 5.5 V18.6 M621.5 18.6 H630.6 M595.3 44.0 H646.7 M646.7 44.0 V98.4 M595.3 61.1 V108.5 M592.8 57.1 H634.1 M634.1 57.1 V85.8 M608.4 70.2 V96.4 M608.4 96.4 H643.7 M605.4 70.2 H621.5 M621.5 70.2 V83.3 M621.5 83.3 H630.6 M595.3 108.7 H646.7 M646.7 108.7 V163.1 M595.3 125.8 V173.2 M592.8 121.8 H634.1 M634.1 121.8 V150.4 M608.4 134.8 V161.1 M608.4 161.1 H643.7 M605.4 134.8 H621.5 M621.5 134.8 V147.9 M621.5 147.9 H630.6 M595.3 173.3 H646.7 M646.7 173.3 V227.7 M595.3 190.4 V237.8 M592.8 186.4 H634.1 M634.1 186.4 V215.1 M608.4 199.5 V225.7 M608.4 225.7 H643.7 M605.4 199.5 H621.5 M621.5 199.5 V212.6 M621.5 212.6 H630.6 M595.3 238.0 H646.7 M646.7 238.0 V292.4 M595.3 255.1 V302.5 M592.8 251.1 H634.1 M634.1 251.1 V279.8 M608.4 264.2 V290.4 M608.4 290.4 H643.7 M605.4 264.2 H621.5 M621.5 264.2 V277.2 M621.5 277.2 H630.6 M595.3 302.6 H646.7 M646.7 302.6 V357.0 M595.3 319.7 V367.1 M592.8 315.7 H634.1 M634.1 315.7 V344.4 M608.4 328.8 V355.0 M608.4 355.0 H643.7 M605.4 328.8 H621.5 M621.5 328.8 V341.9 M621.5 341.9 H630.6 M595.3 367.2 H646.7 M646.7 367.2 V421.6 M595.3 384.4 V431.8 M592.8 380.4 H634.1 M634.1 380.4 V409.1 M608.4 393.4 V419.6 M608.4 419.6 H643.7 M605.4 393.4 H621.5 M621.5 393.4 V406.6 M621.5 406.6 H630.6 M595.3 431.9 H646.7 M646.7 431.9 V486.3 M595.3 449.0 V496.4 M592.8 445.0 H634.1 M634.1 445.0 V473.7 M608.4 458.1 V484.3 M608.4 484.3 H643.7 M605.4 458.1 H621.5 M621.5 458.1 V471.2 M621.5 471.2 H630.6 M595.3 496.6 H646.7 M646.7 496.6 V551.0 M595.3 513.7 V561.1 M592.8 509.7 H634.1 M634.1 509.7 V538.4 M608.4 522.8 V549.0 M608.4 549.0 H643.7 M605.4 522.8 H621.5 M621.5 522.8 V535.9 M621.5 535.9 H630.6" fill="none" stroke="#FAFAFA" stroke-width="2"/><path d="M591.1 -80.5 H642.5 M642.5 -80.5 V-34.9 M591.1 -72.4 V-15.8 M597.4 -67.7 H629.6 M629.6 -67.7 V-47.5 M603.9 -59.6 V-28.9 M603.9 -28.9 H647.2 M609.9 -54.6 H617.0 M617.0 -54.6 V-41.5 M617.0 -41.5 H634.6 M591.1 -15.8 H642.5 M642.5 -15.8 V29.7 M591.1 -7.8 V48.8 M597.4 -3.1 H629.6 M629.6 -3.1 V17.1 M603.9 5.0 V35.7 M603.9 35.7 H647.2 M609.9 10.0 H617.0 M617.0 10.0 V23.1 M617.0 23.1 H634.6 M591.1 48.9 H642.5 M642.5 48.9 V94.4 M591.1 56.9 V113.5 M597.4 61.6 H629.6 M629.6 61.6 V81.8 M603.9 69.7 V100.4 M603.9 100.4 H647.2 M609.9 74.7 H617.0 M617.0 74.7 V87.8 M617.0 87.8 H634.6 M591.1 113.5 H642.5 M642.5 113.5 V159.1 M591.1 121.6 V178.2 M597.4 126.2 H629.6 M629.6 126.2 V146.4 M603.9 134.3 V165.1 M603.9 165.1 H647.2 M609.9 139.4 H617.0 M617.0 139.4 V152.4 M617.0 152.4 H634.6 M591.1 178.2 H642.5 M642.5 178.2 V223.7 M591.1 186.2 V242.8 M597.4 190.9 H629.6 M629.6 190.9 V211.1 M603.9 199.0 V229.7 M603.9 229.7 H647.2 M609.9 204.0 H617.0 M617.0 204.0 V217.1 M617.0 217.1 H634.6 M591.1 242.8 H642.5 M642.5 242.8 V288.4 M591.1 250.9 V307.5 M597.4 255.6 H629.6 M629.6 255.6 V275.8 M603.9 263.7 V294.4 M603.9 294.4 H647.2 M609.9 268.7 H617.0 M617.0 268.7 V281.8 M617.0 281.8 H634.6 M591.1 307.5 H642.5 M642.5 307.5 V353.0 M591.1 315.5 V372.1 M597.4 320.2 H629.6 M629.6 320.2 V340.4 M603.9 328.3 V359.0 M603.9 359.0 H647.2 M609.9 333.3 H617.0 M617.0 333.3 V346.4 M617.0 346.4 H634.6 M591.1 372.1 H642.5 M642.5 372.1 V417.6 M591.1 380.1 V436.8 M597.4 384.9 H629.6 M629.6 384.9 V405.1 M603.9 392.9 V423.6 M603.9 423.6 H647.2 M609.9 397.9 H617.0 M617.0 397.9 V411.1 M617.0 411.1 H634.6 M591.1 436.8 H642.5 M642.5 436.8 V482.3 M591.1 444.8 V501.4 M597.4 449.5 H629.6 M629.6 449.5 V469.7 M603.9 457.6 V488.3 M603.9 488.3 H647.2 M609.9 462.6 H617.0 M617.0 462.6 V475.7 M617.0 475.7 H634.6 M591.1 501.4 H642.5 M642.5 501.4 V547.0 M591.1 509.5 V566.1 M597.4 514.2 H629.6 M629.6 514.2 V534.4 M603.9 522.3 V553.0 M603.9 553.0 H647.2 M609.9 527.3 H617.0 M617.0 527.3 V540.4 M617.0 540.4 H634.6" fill="none" stroke="#737373" stroke-width="2"/></svg><div class="t" style="left:67px;top:38px;font:bold 37.7px/37.7px 'Liberation Serif', serif;color:#141414">Nikomachischen Ethik</div><div class="a" style="left:0;top:-13px;width:688px;height:391px"><svg width="688" height="391" style="left:0;top:0"><path d="M320 189 V197 M175 197 H448 M175 197 V210 M448 197 V210 M183 271 V281 M455 271 V281 M172 281 H507 M172 281 V291 M290 281 V291 M403 281 V291 M507 281 V291" stroke="#6F93BD" stroke-width="3" fill="none"/></svg><div class="a" style="left:268px;top:125px;width:87px;height:50px;background:#7FA3CC;border-radius:6px"></div><div class="a" style="left:272px;top:129px;width:97px;height:60px;background:#F7F9FC;border:3px solid #9DBBDD;border-radius:6px;font-size:11px;color:#333;text-align:center;padding-top:12px">Seele</div><div class="a" style="left:131px;top:206px;width:87px;height:51px;background:#7FA3CC;border-radius:6px"></div><div class="a" style="left:135px;top:210px;width:97px;height:61px;background:#F7F9FC;border:3px solid #9DBBDD;border-radius:6px;font-size:11px;color:#333;text-align:center;padding-top:12px">irrational</div><div class="a" style="left:403px;top:206px;width:85px;height:51px;background:#7FA3CC;border-radius:6px"></div><div class="a" style="left:407px;top:210px;width:95px;height:61px;background:#F7F9FC;border:3px solid #9DBBDD;border-radius:6px;font-size:11px;color:#333;text-align:center;padding-top:12px">rational</div><div class="a" style="left:127px;top:287px;width:86px;height:53px;background:#7FA3CC;border-radius:6px"></div><div class="a" style="left:131px;top:291px;width:96px;height:63px;background:#F7F9FC;border:3px solid #9DBBDD;border-radius:6px;font-size:11px;color:#333;text-align:center;padding-top:12px">Vegetatives</div><div class="a" style="left:236px;top:287px;width:95px;height:53px;background:#7FA3CC;border-radius:6px"></div><div class="a" style="left:240px;top:291px;width:105px;height:63px;background:#F7F9FC;border:3px solid #9DBBDD;border-radius:6px;font-size:11px;color:#333;text-align:center;padding-top:12px">Strebendes</div><div class="a" style="left:354px;top:287px;width:81px;height:53px;background:#7FA3CC;border-radius:6px"></div><div class="a" style="left:358px;top:291px;width:91px;height:63px;background:#F7F9FC;border:3px solid #9DBBDD;border-radius:6px;font-size:11px;color:#333;text-align:center;padding-top:12px">Rationales</div><div class="a" style="left:460px;top:287px;width:83px;height:53px;background:#7FA3CC;border-radius:6px"></div><div class="a" style="left:464px;top:291px;width:93px;height:63px;background:#F7F9FC;border:3px solid #9DBBDD;border-radius:6px;font-size:11px;color:#333;text-align:center;padding-top:12px">Reine</div></div></div><svg width="688" height="391" style="left:0;top:0"><circle cx="23" cy="368" r="10" fill="#4D6F91"/></svg></div></div><svg width="1440" height="866" style="left:0;top:0"><rect x="84.5" y="9.5" width="40" height="16" rx="8" fill="none" stroke="#fff" stroke-width="1.2"/>
<circle cx="92.8" cy="17.5" r="3.6" fill="#fff"/>
<path d="M141.2 11.8 H157.4 V28.1 H143.2 L141.2 26.1 Z" fill="none" stroke="#fff" stroke-width="1.3"/>
<path d="M145.3 11.8 V16.4 H154 V11.8" fill="none" stroke="#fff" stroke-width="1.2"/>
<path d="M145.6 28.1 V22.8 H154 V28.1" fill="none" stroke="#fff" stroke-width="1.2"/>
<path d="M173.6 15.6 H179.5 M173.6 15.6 L177.8 11.8 M173.6 15.6 L177.6 19.6" fill="none" stroke="#E4846A" stroke-width="1.1"/>
<path d="M176 15.6 C183 13.5 188.5 17 187.5 21.5 C186.8 24 183 26 179.3 27.8" fill="none" stroke="#E4846A" stroke-width="1.1"/>
<path d="M195.2 15.6 L199.8 15.6 L197.5 18.2 Z" fill="#D9826B"/>
<path d="M215.2 13.2 A7.6 7.6 0 1 0 222.5 12.6" fill="none" stroke="#E4846A" stroke-width="1.1"/>
<path d="M214.6 11.2 L215.3 13.4 L213 15.6" fill="none" stroke="#E4846A" stroke-width="1.1"/>
<path d="M243.4 11.7 H258.7 M244.6 11.7 V21.6 H257.6 V11.7 M251 21.6 V26.9 M246.6 26.9 H255.6" fill="none" stroke="#fff" stroke-width="1.3"/>
<path d="M249.3 14.2 L253.8 16.6 L249.3 19.1 Z" fill="#fff"/>
<path d="M280 15.2 H284.3 M280 16.9 H284.3" stroke="#fff" stroke-width="0.9"/>
<path d="M279.6 18.3 H284.7 L282.15 21.2 Z" fill="#fff"/>
<rect x="1180" y="9" width="58" height="20" rx="1.5" fill="#fff"/>
<rect x="1263.5" y="13.5" width="13" height="10" fill="none" stroke="#fff" stroke-width="1.1"/>
<path d="M1263.5 16 H1276.5 M1270 23.5 V18 M1267.8 20.2 L1270 18 L1272.2 20.2" fill="none" stroke="#fff" stroke-width="1"/>
<path d="M1313.7 18 H1325" stroke="#fff" stroke-width="1.1"/>
<rect x="1363.5" y="15.5" width="8" height="8" fill="none" stroke="#fff" stroke-width="1.1"/>
<path d="M1365.6 15.5 V13.5 H1373.8 V21.5 H1371.5" fill="none" stroke="#fff" stroke-width="1.1"/>
<path d="M1412.2 13.3 L1422.5 23.6 M1422.5 13.3 L1412.2 23.6" stroke="#fff" stroke-width="1.2"/>
<rect x="70" y="65" width="41" height="3" fill="#B7472A"/>
<circle cx="855" cy="52.3" r="4.6" fill="none" stroke="#444" stroke-width="1.2"/>
<path d="M851.6 55.7 L845.3 61.6" stroke="#444" stroke-width="1.3"/>
<rect x="1241.5" y="41.5" width="70" height="24" rx="2" fill="#fff" stroke="#E1DFDD"/>
<rect x="1322.5" y="41.5" width="105" height="24" rx="2" fill="#fff" stroke="#E1DFDD"/>
<path d="M1249 51 V59 H1261 V55.5" fill="none" stroke="#B7472A" stroke-width="1.2"/>
<path d="M1252.5 57 C1253 52 1256 50.5 1259.5 50.5 V48 L1262.5 51.5 L1259.5 55 V52.8 C1256.5 52.8 1254 54 1252.5 57 Z" fill="none" stroke="#B7472A" stroke-width="1.1"/>
<path d="M1331.5 48 H1343 V55.5 H1336 L1333 58.5 V55.5 H1331.5 Z" fill="none" stroke="#B7472A" stroke-width="1.2"/><rect x="98.5" y="74.0" width="1" height="94.0" fill="#D6D4D2"/>
<rect x="243.1" y="74.0" width="1" height="94.0" fill="#D6D4D2"/>
<rect x="530.4" y="74.0" width="1" height="94.0" fill="#D6D4D2"/>
<rect x="871.3" y="74.0" width="1" height="94.0" fill="#D6D4D2"/>
<rect x="1262.7" y="74.0" width="1" height="94.0" fill="#D6D4D2"/>
<rect x="1366.9" y="74.0" width="1" height="94.0" fill="#D6D4D2"/>
<rect x="21" y="82" width="21" height="25" fill="#F8F8F8"/>
<path d="M25 82 H21 V106.6 H34 M37 82 H41.4 V90" fill="none" stroke="#F0A030" stroke-width="2"/>
<path d="M24.5 85 V81.2 H27.5 C27.8 77.5 34.2 77.5 34.5 81.2 H37.5 V85 Z" fill="#F8F8F8" stroke="#6A6A6A" stroke-width="1.2"/>
<rect x="34.7" y="90.7" width="13.6" height="18.4" fill="#F8F8F8" stroke="#505050" stroke-width="1.5"/>
<path d="M28.9 136.5 H34.3 L31.6 139.2 Z" fill="#444444"/>
<path d="M64.2 78.2 L69.6 91.2 M69.2 78.2 L63.8 91.2" stroke="#A8A8A8" stroke-width="1"/><circle cx="63.6" cy="92.9" r="1.7" fill="none" stroke="#A8A8A8" stroke-width="1"/><circle cx="69.9" cy="92.9" r="1.7" fill="none" stroke="#A8A8A8" stroke-width="1"/>
<path d="M58.7 103.5 H63.5 L65.5 105.5 M58.7 103.5 V117.5 H65" fill="none" stroke="#A8A8A8" stroke-width="1.1"/><path d="M65.5 106.7 H71 L75.3 111 V119.2 H65.5 Z M71 106.7 V111 H75.3" fill="#F3F2F1" stroke="#A8A8A8" stroke-width="1.1"/><path d="M67.8 113 H72.8 M67.8 115.6 H72.8" stroke="#A8A8A8" stroke-width="0.9"/>
<path d="M81.6 110.7 H86.8 L84.2 113.3 Z" fill="#B0B0B0"/>
<path d="M74.8 129.3 L70.8 133.5" stroke="#A8A8A8" stroke-width="2"/><path d="M58.8 135.3 L66.5 131.8 L72 137.3 L66 144 Z" fill="#D4D4D4" stroke="#A8A8A8" stroke-width="1"/><path d="M62 138.5 L69 135" stroke="#A8A8A8" stroke-width="0.8"/>
<path d="M86.8 166.2 V159.7 H93.8 M88.8 161.7 L94.1 167.0 M91.3 167.0 H94.1 V164.2" fill="none" stroke="#A0A0A0" stroke-width="0.9"/>
<rect x="117" y="81" width="28.5" height="22.5" fill="#F8F8F8"/>
<path d="M130.5 80.8 H145.5 V103.6 H116.7 V85.5" fill="none" stroke="#6A6A6A" stroke-width="1.6"/>
<path d="M130.5 83.9 H143 V101.2 H119.4 V86" fill="none" stroke="#A8A8A8" stroke-width="1.5"/>
<path d="M124.7 88.8 H143 M130.5 88.8 V101.2" fill="none" stroke="#8A8A8A" stroke-width="1.1"/>
<path d="M113.9 83.3 H130 M122.1 75.6 V91.4" stroke="#28A860" stroke-width="1.7"/>
<path d="M144.0 137.2 H149.3 L146.7 139.8 Z" fill="#444444"/>
<rect x="158.8" y="79.5" width="15.6" height="13.0" fill="#A4A4A4" stroke="#555555" stroke-width="1.2"/>
<rect x="161" y="82.5" width="11.2" height="1" fill="#F8F8F8"/><rect x="161" y="84.7" width="4.8" height="5.3" fill="#F8F8F8"/><rect x="167" y="84.7" width="5.2" height="5.3" fill="#F8F8F8"/>
<path d="M219.0 85.8 H224.0 L221.5 88.2 Z" fill="#444444"/>
<rect x="158.8" y="104.3" width="15.6" height="13.0" fill="#A4A4A4" stroke="#555555" stroke-width="1.2"/>
<rect x="161" y="107" width="11.2" height="1" fill="#F8F8F8"/><rect x="161" y="109.2" width="11.2" height="5.5" fill="#F8F8F8"/>
<path d="M166.8 112 C167.5 107 165 105.8 159.8 106.4 M159.6 106.4 L163 103 M159.6 106.4 L163.2 109.6" fill="none" stroke="#2A8AD8" stroke-width="1.5"/>
<rect x="158.2" y="128.3" width="15.6" height="2.6" fill="#28A860"/>
<rect x="158.8" y="132.2" width="15.0" height="12.3" fill="#A4A4A4" stroke="#555555" stroke-width="1.2"/>
<rect x="161" y="135" width="10.6" height="7" fill="#F8F8F8"/>
<path d="M223.0 135.7 H228.3 L225.7 138.3 Z" fill="#444444"/>
<rect x="252.5" y="83.5" width="190" height="23" fill="#fff" stroke="#C8C6C4"/><path d="M395.7 83.5 V106.5" stroke="#E1DFDD"/>
<path d="M385.5 94.2 H390.5 L388.0 96.8 Z" fill="#A6A6A6"/>
<path d="M432.5 94.2 H437.5 L435.0 96.8 Z" fill="#A6A6A6"/><text x="449.7" y="98.7" font-family="Liberation Sans" font-size="16.0" font-weight="normal" font-style="normal" fill="#A0A0A0" textLength="8.8" lengthAdjust="spacingAndGlyphs" >A</text>
<path d="M459.5 91 L461.3 88 L463.1 91" fill="none" stroke="#A0A0A0" stroke-width="1"/>
<text x="473.5" y="98.7" font-family="Liberation Sans" font-size="15.0" font-weight="normal" font-style="normal" fill="#A0A0A0" textLength="8.8" lengthAdjust="spacingAndGlyphs" >A</text>
<path d="M483.5 87.5 L485.3 90.5 L487.1 87.5" fill="none" stroke="#A0A0A0" stroke-width="1"/>
<rect x="494.5" y="84.6" width="1" height="21.4" fill="#D6D4D2"/>
<text x="502.3" y="99.5" font-family="Liberation Sans" font-size="18.0" font-weight="normal" font-style="normal" fill="#A0A0A0" textLength="11.7" lengthAdjust="spacingAndGlyphs" >A</text>
<path d="M511 96 L515 91.5 L519 95.5 L515 100 Z" fill="none" stroke="#A0A0A0" stroke-width="1.1"/>
<text x="260.0" y="133.3" font-family="Liberation Sans" font-size="14.5" font-weight="bold" font-style="normal" fill="#A0A0A0" textLength="8.3" lengthAdjust="spacingAndGlyphs" >B</text>
<path d="M287.8 122.8 H292.6 M283.6 132.6 H288.4 M290.2 122.8 L286 132.6" fill="none" stroke="#A0A0A0" stroke-width="1.2"/>
<text x="306.7" y="133.3" font-family="Liberation Sans" font-size="14.5" font-weight="normal" font-style="normal" fill="#A0A0A0" textLength="10.0" lengthAdjust="spacingAndGlyphs" >U</text>
<path d="M306.5 135.5 H317" stroke="#A0A0A0" stroke-width="1"/>
<text x="331.7" y="133.3" font-family="Liberation Sans" font-size="14.5" font-weight="bold" font-style="normal" fill="#A0A0A0" textLength="8.3" lengthAdjust="spacingAndGlyphs" >S</text>
<text x="352.0" y="133.3" font-family="Liberation Sans" font-size="13.5" font-weight="normal" font-style="normal" fill="#A0A0A0" textLength="16.5" lengthAdjust="spacingAndGlyphs" >ab</text>
<path d="M351.5 128.5 H369.3" stroke="#A0A0A0" stroke-width="1"/>
<text x="377.0" y="129.0" font-family="Liberation Sans" font-size="11.0" font-weight="normal" font-style="normal" fill="#A0A0A0" textLength="15.5" lengthAdjust="spacingAndGlyphs" >AV</text>
<path d="M376.5 133.5 H393.5 M376.5 133.5 L379 131.5 M376.5 133.5 L379 135.5 M393.5 133.5 L391 131.5 M393.5 133.5 L391 135.5" fill="none" stroke="#A0A0A0" stroke-width="0.9"/>
<path d="M396.7 128.1 H401.7 L399.2 130.6 Z" fill="#B0B0B0"/>
<text x="410.0" y="133.3" font-family="Liberation Sans" font-size="15.0" font-weight="normal" font-style="normal" fill="#A0A0A0" textLength="18.3" lengthAdjust="spacingAndGlyphs" >Aa</text>
<path d="M430.0 127.8 H436.0 L433.0 130.8 Z" fill="#B0B0B0"/>
<rect x="444.8" y="118.7" width="1" height="21.0" fill="#D6D4D2"/>
<path d="M458 131 L466.5 121.5 L469.5 124.5 L461 134 Z M458 131 L456 133.5 L459 134 L461 134" fill="none" stroke="#A0A0A0" stroke-width="1.1"/>
<rect x="452" y="133.3" width="17.6" height="3.9" fill="#A8A8A8"/>
<path d="M476.6 128.0 H481.8 L479.2 130.6 Z" fill="#B0B0B0"/>
<text x="490.0" y="132.0" font-family="Liberation Sans" font-size="16.0" font-weight="normal" font-style="normal" fill="#A0A0A0" textLength="15.5" lengthAdjust="spacingAndGlyphs" >A</text>
<rect x="489" y="133.3" width="17.5" height="3.9" fill="#A8A8A8"/>
<path d="M513.0 127.9 H518.8 L515.9 130.8 Z" fill="#B0B0B0"/>
<path d="M518.3 166.5 V160.0 H525.3 M520.3 162.0 L525.6 167.3 M522.8 167.3 H525.6 V164.5" fill="none" stroke="#A0A0A0" stroke-width="0.9"/>
<rect x="540.2" y="83.1" width="36.6" height="22.9" fill="#C6C6C6"/>
<rect x="543.3" y="86" width="2.4" height="2.4" fill="#9A9A9A"/><rect x="543.3" y="92.3" width="2.4" height="2.4" fill="#9A9A9A"/><rect x="543.3" y="99" width="2.4" height="2.4" fill="#9A9A9A"/>
<path d="M548.5 87.2 H559.6" stroke="#9A9A9A" stroke-width="1.3"/><path d="M548.5 93.5 H559.6" stroke="#9A9A9A" stroke-width="1.3"/><path d="M548.5 100.2 H559.6" stroke="#9A9A9A" stroke-width="1.3"/>
<text x="580.0" y="89.0" font-family="Liberation Sans" font-size="5.5" font-weight="normal" font-style="normal" fill="#A0A0A0" textLength="3.0" lengthAdjust="spacingAndGlyphs" >1</text>
<text x="580.0" y="95.5" font-family="Liberation Sans" font-size="5.5" font-weight="normal" font-style="normal" fill="#A0A0A0" textLength="3.0" lengthAdjust="spacingAndGlyphs" >2</text>
<text x="580.0" y="102.0" font-family="Liberation Sans" font-size="5.5" font-weight="normal" font-style="normal" fill="#A0A0A0" textLength="3.0" lengthAdjust="spacingAndGlyphs" >3</text>
<path d="M585.5 87.2 H596.6" stroke="#A0A0A0" stroke-width="1.3"/><path d="M585.5 93.5 H596.6" stroke="#A0A0A0" stroke-width="1.3"/><path d="M585.5 100.2 H596.6" stroke="#A0A0A0" stroke-width="1.3"/>
<path d="M604.4 93.5 H609.6 L607.0 96.1 Z" fill="#B0B0B0"/>
<rect x="616.9" y="84.0" width="1" height="21.0" fill="#D6D4D2"/>
<path d="M625.8 86.6 H641.4" stroke="#A0A0A0" stroke-width="1.3"/><path d="M625.8 100.6 H641.4" stroke="#A0A0A0" stroke-width="1.3"/>
<path d="M633.0 91.3 H641.4" stroke="#A0A0A0" stroke-width="1.3"/><path d="M633.0 96.0 H641.4" stroke="#A0A0A0" stroke-width="1.3"/>
<path d="M631.5 93.6 H625.8 M625.8 93.6 L628 91.6 M625.8 93.6 L628 95.6" fill="none" stroke="#A0A0A0" stroke-width="0.9"/>
<path d="M649.7 86.6 H665.7" stroke="#A0A0A0" stroke-width="1.3"/><path d="M649.7 100.6 H665.7" stroke="#A0A0A0" stroke-width="1.3"/>
<path d="M657.5 91.3 H665.7" stroke="#A0A0A0" stroke-width="1.3"/><path d="M657.5 96.0 H665.7" stroke="#A0A0A0" stroke-width="1.3"/>
<path d="M649.7 93.6 H655.5 M655.5 93.6 L653.3 91.6 M655.5 93.6 L653.3 95.6" fill="none" stroke="#A0A0A0" stroke-width="0.9"/>
<rect x="673.0" y="84.0" width="1" height="21.0" fill="#D6D4D2"/>
<path d="M682.5 86.5 V101.7 M680.3 88.7 L682.5 86.5 L684.7 88.7 M680.3 99.5 L682.5 101.7 L684.7 99.5" fill="none" stroke="#A0A0A0" stroke-width="0.9"/>
<path d="M687.0 87.2 H698.8" stroke="#A0A0A0" stroke-width="1.3"/><path d="M687.0 91.5 H698.8" stroke="#A0A0A0" stroke-width="1.3"/><path d="M687.0 96.0 H698.8" stroke="#A0A0A0" stroke-width="1.3"/><path d="M687.0 100.5 H698.8" stroke="#A0A0A0" stroke-width="1.3"/>
<path d="M701.7 93.6 H706.5 L704.1 96.0 Z" fill="#B0B0B0"/>
<path d="M544.0 120.5 H559.6" stroke="#A0A0A0" stroke-width="1.3"/><path d="M544.0 130.5 H559.6" stroke="#A0A0A0" stroke-width="1.3"/><path d="M544.0 125.5 H556.0" stroke="#A0A0A0" stroke-width="1.3"/><path d="M544.0 134.0 H556.0" stroke="#A0A0A0" stroke-width="1.3"/>
<path d="M568.4 120.5 H584.0" stroke="#A0A0A0" stroke-width="1.3"/><path d="M568.4 130.5 H584.0" stroke="#A0A0A0" stroke-width="1.3"/><path d="M570.5 125.5 H582.0" stroke="#A0A0A0" stroke-width="1.3"/><path d="M570.5 134.0 H582.0" stroke="#A0A0A0" stroke-width="1.3"/>
<path d="M592.3 120.5 H607.9" stroke="#A0A0A0" stroke-width="1.3"/><path d="M592.3 130.5 H607.9" stroke="#A0A0A0" stroke-width="1.3"/><path d="M596.0 125.5 H607.9" stroke="#A0A0A0" stroke-width="1.3"/><path d="M596.0 134.0 H607.9" stroke="#A0A0A0" stroke-width="1.3"/>
<path d="M616.0 120.5 H632.2" stroke="#A0A0A0" stroke-width="1.3"/><path d="M616.0 125.5 H632.2" stroke="#A0A0A0" stroke-width="1.3"/><path d="M616.0 130.5 H632.2" stroke="#A0A0A0" stroke-width="1.3"/><path d="M616.0 134.0 H632.2" stroke="#A0A0A0" stroke-width="1.3"/>
<rect x="639.3" y="117.7" width="1" height="21.4" fill="#D6D4D2"/>
<path d="M649.1 124.2 H654.5" stroke="#B0B0B0" stroke-width="1.1"/><path d="M649.1 127.5 H654.5" stroke="#B0B0B0" stroke-width="1.1"/><path d="M649.1 130.7 H654.5" stroke="#B0B0B0" stroke-width="1.1"/><path d="M657.5 124.2 H662.8" stroke="#B0B0B0" stroke-width="1.1"/><path d="M657.5 127.5 H662.8" stroke="#B0B0B0" stroke-width="1.1"/><path d="M657.5 130.7 H662.8" stroke="#B0B0B0" stroke-width="1.1"/>
<path d="M668.0 126.5 H673.0 L670.5 128.9 Z" fill="#B0B0B0"/>
<path d="M718.5 78.5 V94.5 M716.7 92.3 L718.5 94.5 L720.3 92.3 M727.5 87 V94.5 M725.7 92.3 L727.5 94.5 L729.3 92.3" fill="none" stroke="#A0A0A0" stroke-width="1"/>
<text x="723.5" y="85.5" font-family="Liberation Sans" font-size="9.0" font-weight="normal" font-style="normal" fill="#A0A0A0" textLength="7.5" lengthAdjust="spacingAndGlyphs" >A</text>
<path d="M817.4 85.4 H822.2 L819.8 87.8 Z" fill="#B0B0B0"/>
<path d="M718 104 H715.5 V118 H718 M729.5 104 H732 V118 H729.5 M717.5 111 H730 M723.7 104 V109 M721.8 106 L723.7 104 L725.6 106 M723.7 113 V118 M721.8 116 L723.7 118 L725.6 116" fill="none" stroke="#A0A0A0" stroke-width="1"/>
<path d="M795.0 110.0 H800.0 L797.5 112.5 Z" fill="#B0B0B0"/>
<path d="M715 130 H724 L727 133.5 H733 M715 130 L718 135 H722" fill="none" stroke="#A0A0A0" stroke-width="1"/><rect x="720.5" y="134.5" width="11.5" height="8" fill="#F3F2F1" stroke="#A0A0A0"/><path d="M723 137 H729.5 M723 140 H729.5" stroke="#A0A0A0" stroke-width="0.8"/>
<path d="M852.0 134.8 H856.7 L854.4 137.2 Z" fill="#B0B0B0"/>
<path d="M859.5 166.2 V159.7 H866.5 M861.5 161.7 L866.8 167.0 M864.0 167.0 H866.8 V164.2" fill="none" stroke="#A0A0A0" stroke-width="0.9"/><rect x="881.5" y="75.5" width="151.5" height="67" fill="#fff" stroke="#C8C6C4"/>
<rect x="1018" y="76" width="14.5" height="22" fill="#E1E1E1"/>
<path d="M1017.5 75.5 V142.5 M1018 98.5 H1033 M1018 118.5 H1033" stroke="#E1DFDD"/>
<path d="M1023.2 89.5 H1028.2 L1025.7 87 Z" fill="#C8C8C8"/>
<path d="M1023.2 107.8 H1028.2 L1025.7 110.2 Z" fill="#606060"/>
<path d="M1023 127.5 H1028.5" stroke="#606060" stroke-width="0.9"/><path d="M1023.2 129.8 H1028.2 L1025.7 132.2 Z" fill="#606060"/>
<rect x="886.5" y="80.5" width="14" height="12" stroke="#404040" stroke-width="1.1" fill="none"/>
<rect x="885.0" y="79.0" width="3" height="3" fill="#1E88E5"/>
<rect x="899.0" y="79.0" width="3" height="3" fill="#1E88E5"/>
<rect x="885.0" y="91.0" width="3" height="3" fill="#1E88E5"/>
<rect x="899.0" y="91.0" width="3" height="3" fill="#1E88E5"/>
<text x="889.5" y="90.5" font-family="Liberation Sans" font-weight="bold" font-size="10" fill="#1E88E5">A</text>
<path d="M908 78.5 L924 94" stroke="#404040" stroke-width="1.1" fill="none"/>
<path d="M930 78 L946.5 94.5 M946.5 94.5 V89 M946.5 94.5 H941" stroke="#404040" stroke-width="1.1" fill="none"/>
<rect x="952.5" y="80.5" width="16.5" height="12.5" fill="#F6F6F6" stroke="#404040" stroke-width="1.1"/>
<ellipse cx="982.5" cy="86.5" rx="8.5" ry="6.2" fill="#F6F6F6" stroke="#404040" stroke-width="1.1"/>
<rect x="996.5" y="80.5" width="17" height="12.5" rx="3" fill="#F6F6F6" stroke="#404040" stroke-width="1.1"/>
<path d="M893.5 101.5 L901.5 116.5 H885.5 Z" fill="#F6F6F6" stroke="#404040" stroke-width="1.1"/>
<path d="M907.5 101.5 H916 V116 H924.5" stroke="#404040" stroke-width="1.1" fill="none"/>
<path d="M930 102 H937.5 V114.5 H946 M946 114.5 L943 112 M946 114.5 L943 117" stroke="#404040" stroke-width="1.1" fill="none"/>
<path d="M952.5 105.5 H961 V101 L969 109 L961 117 V112.5 H952.5 Z" fill="#F6F6F6" stroke="#404040" stroke-width="1.1"/>
<path d="M979 101.5 H986 V110 H990.5 L982.5 117.5 L974.5 110 H979 Z" fill="#F6F6F6" stroke="#404040" stroke-width="1.1"/>
<path d="M1000 101.5 H1005.5 C1004.5 104 1005.5 107 1009 107 C1012 107 1013.5 109 1013.5 111 V116.5 H999 A2.5 2.5 0 0 1 996.5 114 V105 Z" fill="#F6F6F6" stroke="#404040" stroke-width="1.1"/>
<path d="M886 123.5 C884 130 888.5 135 893 136.5 C899 138 902 135 899 133 C895 131 889 133 886 130 C883 126 888 122 893 124 C897 125.5 894 130 889 129" stroke="#404040" stroke-width="1.1" fill="none"/>
<path d="M907.5 124 C916 124 923.5 130 924 139.5" stroke="#404040" stroke-width="1.1" fill="none"/>
<path d="M930 129 C934 122 937 123 939 128 C941 134 943 137 945.8 137" stroke="#404040" stroke-width="1.1" fill="none"/>
<path d="M961.5 124 C958.5 124 959 127 959 129.5 C959 131.5 958 131.8 957 132 C958 132.2 959 132.5 959 134.5 C959 137 958.5 140 961.5 140" stroke="#404040" stroke-width="1.1" fill="none"/>
<path d="M980.5 124 C983.5 124 983 127 983 129.5 C983 131.5 984 131.8 985 132 C984 132.2 983 132.5 983 134.5 C983 137 983.5 140 980.5 140" stroke="#404040" stroke-width="1.1" fill="none"/>
<path d="M1005 124 L1007.3 129.6 L1013 129.8 L1008.6 133.6 L1010.2 139.5 L1005 136.2 L999.8 139.5 L1001.4 133.6 L997 129.8 L1002.7 129.6 Z" fill="#F6F6F6" stroke="#404040" stroke-width="1.1"/>
<rect x="1052.3" y="82.3" width="20.5" height="20.3" fill="#F8D78E" stroke="#EE9A3A" stroke-width="1.2"/>
<rect x="1048" y="78.3" width="12.5" height="11.5" fill="#F8F8F8" stroke="#555" stroke-width="1.3"/>
<rect x="1065" y="95" width="12.4" height="12" fill="#F8F8F8" stroke="#555" stroke-width="1.3"/>
<path d="M1060.4 136.1 H1065.5 L1063.0 138.7 Z" fill="#444444"/>
<rect x="1098.6" y="77.8" width="29" height="29.6" rx="2.5" fill="#EBEBEB" stroke="#A8A8A8" stroke-width="1.4"/>
<path d="M1129.5 88.8 L1115 103" stroke="#A8A8A8" stroke-width="3.6" stroke-linecap="round"/><path d="M1129.5 88.8 L1115 103" stroke="#F0F0F0" stroke-width="1.4" stroke-linecap="round"/>
<path d="M1117 101.5 C1113.5 99.5 1110.5 101.5 1110 104.5 C1109.5 106.5 1108 107.8 1106.5 108.3 C1110 109.3 1114.5 108.8 1116.5 106 C1117.8 104.5 1118 102.5 1117 101.5 Z" fill="#C4C4C4" stroke="#A8A8A8" stroke-width="0.8"/>
<path d="M1129.0 137.6 H1133.8 L1131.4 140.0 Z" fill="#B0B0B0"/>
<path d="M1144.3 82.1 L1150.2 75.8 L1154.8 80.4 L1148.9 86.8 Z" fill="#F6F6F6" stroke="#A6A6A6" stroke-width="1.2"/>
<path d="M1150.6 75.5 C1153 74.5 1156.3 76.5 1156.5 79.5 V85.5" fill="none" stroke="#A6A6A6" stroke-width="1.1"/>
<rect x="1141.7" y="88.4" width="17.1" height="3.8" fill="#ABA9A7"/>
<path d="M1220.9 83.8 H1225.7 L1223.3 86.2 Z" fill="#B0B0B0"/>
<path d="M1151.9 99.8 H1142.6 V110 H1144.5" fill="none" stroke="#A6A6A6" stroke-width="1.2"/>
<path d="M1147.6 109.3 L1148.5 105.8 L1155.8 98.5 C1156.5 97.8 1157.8 97.8 1158.4 98.5 C1159 99.2 1159 100.3 1158.3 101 L1151 108.3 Z" fill="#F6F6F6" stroke="#A6A6A6" stroke-width="1.1"/>
<rect x="1141.7" y="111.6" width="17.1" height="4.2" fill="#ABA9A7"/>
<path d="M1245.7 106.4 H1250.4 L1248.1 108.8 Z" fill="#B0B0B0"/>
<path d="M1142.2 132.3 L1145.6 125 H1157 L1158.4 129 L1154.6 136 H1144.6 Z" fill="#C8C8C8" stroke="#A6A6A6" stroke-width="1.1"/>
<path d="M1142.2 132.3 L1145.6 125 H1157 L1153.6 132.5 Z" fill="#F0F0F0" stroke="#A6A6A6" stroke-width="1.1"/>
<path d="M1241.7 129.3 H1246.5 L1244.1 131.7 Z" fill="#B0B0B0"/>
<path d="M1250.1 166.2 V159.7 H1257.1 M1252.1 161.7 L1257.4 167.0 M1254.6 167.0 H1257.4 V164.2" fill="none" stroke="#A0A0A0" stroke-width="0.9"/>
<circle cx="1286.3" cy="81.3" r="5.6" fill="none" stroke="#444" stroke-width="1.2"/><path d="M1282.3 85.5 L1276 91.6" stroke="#444" stroke-width="1.3"/>
<text x="1281.3" y="106.8" font-family="Liberation Sans" font-size="11" fill="#A535C9">b</text><text x="1285.2" y="116.3" font-family="Liberation Sans" font-size="10.5" fill="#2A8AD8">c</text>
<path d="M1279.8 101.5 C1275 103 1274.5 109.5 1279.5 112 L1283.5 112 M1281 109.6 L1283.6 112 L1281 114.4" fill="none" stroke="#2A8AD8" stroke-width="1.3"/>
<path d="M1349.7 106.4 H1355.3 L1352.5 109.2 Z" fill="#444444"/>
<path d="M1277.8 123 V137 L1281 134 L1283.5 139 L1285.8 138 L1283.5 133.3 L1288.3 133 Z" fill="#fff" stroke="#444" stroke-width="1.1"/>
<path d="M1333.3 130.2 H1338.3 L1335.8 132.7 Z" fill="#444444"/>
<path d="M1423.3 165 L1427.7 160 L1432.1 165" fill="none" stroke="#444" stroke-width="1.2"/><rect x="258" y="175" width="1" height="382" fill="#C8C8C8"/><rect x="259" y="175" width="3" height="382" fill="#E4E4E4"/><rect x="262" y="175" width="1" height="382" fill="#C8C8C8"/>
<rect x="242" y="175" width="16" height="383" fill="#DCDCDC"/>
<rect x="242" y="175" width="16" height="15" fill="#fff"/><path d="M246.5 185 H253.5 L250 181.2 Z" fill="#505050"/>
<rect x="242.5" y="190.5" width="15" height="203.5" fill="#fff" stroke="#C2C2C2"/>
<rect x="242" y="540" width="16" height="15" fill="#fff"/><path d="M246.5 545.8 H253.5 L250.0 549.2 Z" fill="#505050"/>
<rect x="1425" y="175" width="15" height="382" fill="#DCDCDC"/>
<rect x="1425.5" y="174.5" width="15" height="14.5" fill="#fff" stroke="#D0D0D0"/><path d="M1429.8 184.2 H1436.2 L1433 180.8 Z" fill="#505050"/>
<rect x="1425.5" y="214.5" width="15" height="43.7" fill="#fff" stroke="#B8B8B8"/>
<rect x="1425.5" y="482.5" width="15" height="14.5" fill="#fff" stroke="#D0D0D0"/><path d="M1429.8 488.4 H1436.2 L1433.0 491.6 Z" fill="#505050"/>
<path d="M1429.8 508 H1436.2 L1433 504.5 Z M1429.8 512.5 H1436.2 L1433 509 Z" fill="#505050"/>
<path d="M1429.8 521 H1436.2 L1433 524.5 Z M1429.8 525.5 H1436.2 L1433 529 Z" fill="#505050"/>
<rect x="515.6" y="176.4" width="685.4" height="14.4" fill="#fff"/>
<rect x="516.1" y="183" width="1" height="1" fill="#8A8A8A"/>
<rect x="522.5" y="181.5" width="1" height="4" fill="#707070"/>
<rect x="529.0" y="183" width="1" height="1" fill="#8A8A8A"/>
<rect x="535.4" y="183" width="1" height="1" fill="#8A8A8A"/>
<rect x="541.8" y="183" width="1" height="1" fill="#8A8A8A"/>
<rect x="554.7" y="183" width="1" height="1" fill="#8A8A8A"/>
<rect x="561.1" y="183" width="1" height="1" fill="#8A8A8A"/>
<rect x="567.5" y="183" width="1" height="1" fill="#8A8A8A"/>
<rect x="574.0" y="181.5" width="1" height="4" fill="#707070"/>
<rect x="580.4" y="183" width="1" height="1" fill="#8A8A8A"/>
<rect x="586.8" y="183" width="1" height="1" fill="#8A8A8A"/>
<rect x="593.3" y="183" width="1" height="1" fill="#8A8A8A"/>
<rect x="606.1" y="183" width="1" height="1" fill="#8A8A8A"/>
<rect x="612.6" y="183" width="1" height="1" fill="#8A8A8A"/>
<rect x="619.0" y="183" width="1" height="1" fill="#8A8A8A"/>
<rect x="625.4" y="181.5" width="1" height="4" fill="#707070"/>
<rect x="631.9" y="183" width="1" height="1" fill="#8A8A8A"/>
<rect x="638.3" y="183" width="1" height="1" fill="#8A8A8A"/>
<rect x="644.7" y="183" width="1" height="1" fill="#8A8A8A"/>
<rect x="657.6" y="183" width="1" height="1" fill="#8A8A8A"/>
<rect x="664.0" y="183" width="1" height="1" fill="#8A8A8A"/>
<rect x="670.4" y="183" width="1" height="1" fill="#8A8A8A"/>
<rect x="676.9" y="181.5" width="1" height="4" fill="#707070"/>
<rect x="683.3" y="183" width="1" height="1" fill="#8A8A8A"/>
<rect x="689.7" y="183" width="1" height="1" fill="#8A8A8A"/>
<rect x="696.2" y="183" width="1" height="1" fill="#8A8A8A"/>
<rect x="709.0" y="183" width="1" height="1" fill="#8A8A8A"/>
<rect x="715.5" y="183" width="1" height="1" fill="#8A8A8A"/>
<rect x="721.9" y="183" width="1" height="1" fill="#8A8A8A"/>
<rect x="728.3" y="181.5" width="1" height="4" fill="#707070"/>
<rect x="734.8" y="183" width="1" height="1" fill="#8A8A8A"/>
<rect x="741.2" y="183" width="1" height="1" fill="#8A8A8A"/>
<rect x="747.6" y="183" width="1" height="1" fill="#8A8A8A"/>
<rect x="760.5" y="183" width="1" height="1" fill="#8A8A8A"/>
<rect x="766.9" y="183" width="1" height="1" fill="#8A8A8A"/>
<rect x="773.3" y="183" width="1" height="1" fill="#8A8A8A"/>
<rect x="779.8" y="181.5" width="1" height="4" fill="#707070"/>
<rect x="786.2" y="183" width="1" height="1" fill="#8A8A8A"/>
<rect x="792.6" y="183" width="1" height="1" fill="#8A8A8A"/>
<rect x="799.1" y="183" width="1" height="1" fill="#8A8A8A"/>
<rect x="811.9" y="183" width="1" height="1" fill="#8A8A8A"/>
<rect x="818.4" y="183" width="1" height="1" fill="#8A8A8A"/>
<rect x="824.8" y="183" width="1" height="1" fill="#8A8A8A"/>
<rect x="831.2" y="181.5" width="1" height="4" fill="#707070"/>
<rect x="837.7" y="183" width="1" height="1" fill="#8A8A8A"/>
<rect x="844.1" y="183" width="1" height="1" fill="#8A8A8A"/>
<rect x="850.5" y="183" width="1" height="1" fill="#8A8A8A"/>
<rect x="863.4" y="183" width="1" height="1" fill="#8A8A8A"/>
<rect x="869.8" y="183" width="1" height="1" fill="#8A8A8A"/>
<rect x="876.2" y="183" width="1" height="1" fill="#8A8A8A"/>
<rect x="882.7" y="181.5" width="1" height="4" fill="#707070"/>
<rect x="889.1" y="183" width="1" height="1" fill="#8A8A8A"/>
<rect x="895.5" y="183" width="1" height="1" fill="#8A8A8A"/>
<rect x="902.0" y="183" width="1" height="1" fill="#8A8A8A"/>
<rect x="914.8" y="183" width="1" height="1" fill="#8A8A8A"/>
<rect x="921.3" y="183" width="1" height="1" fill="#8A8A8A"/>
<rect x="927.7" y="183" width="1" height="1" fill="#8A8A8A"/>
<rect x="934.1" y="181.5" width="1" height="4" fill="#707070"/>
<rect x="940.6" y="183" width="1" height="1" fill="#8A8A8A"/>
<rect x="947.0" y="183" width="1" height="1" fill="#8A8A8A"/>
<rect x="953.4" y="183" width="1" height="1" fill="#8A8A8A"/>
<rect x="966.3" y="183" width="1" height="1" fill="#8A8A8A"/>
<rect x="972.7" y="183" width="1" height="1" fill="#8A8A8A"/>
<rect x="979.1" y="183" width="1" height="1" fill="#8A8A8A"/>
<rect x="985.6" y="181.5" width="1" height="4" fill="#707070"/>
<rect x="992.0" y="183" width="1" height="1" fill="#8A8A8A"/>
<rect x="998.4" y="183" width="1" height="1" fill="#8A8A8A"/>
<rect x="1004.9" y="183" width="1" height="1" fill="#8A8A8A"/>
<rect x="1017.7" y="183" width="1" height="1" fill="#8A8A8A"/>
<rect x="1024.2" y="183" width="1" height="1" fill="#8A8A8A"/>
<rect x="1030.6" y="183" width="1" height="1" fill="#8A8A8A"/>
<rect x="1037.0" y="181.5" width="1" height="4" fill="#707070"/>
<rect x="1043.5" y="183" width="1" height="1" fill="#8A8A8A"/>
<rect x="1049.9" y="183" width="1" height="1" fill="#8A8A8A"/>
<rect x="1056.3" y="183" width="1" height="1" fill="#8A8A8A"/>
<rect x="1069.2" y="183" width="1" height="1" fill="#8A8A8A"/>
<rect x="1075.6" y="183" width="1" height="1" fill="#8A8A8A"/>
<rect x="1082.0" y="183" width="1" height="1" fill="#8A8A8A"/>
<rect x="1088.5" y="181.5" width="1" height="4" fill="#707070"/>
<rect x="1094.9" y="183" width="1" height="1" fill="#8A8A8A"/>
<rect x="1101.3" y="183" width="1" height="1" fill="#8A8A8A"/>
<rect x="1107.8" y="183" width="1" height="1" fill="#8A8A8A"/>
<rect x="1120.6" y="183" width="1" height="1" fill="#8A8A8A"/>
<rect x="1127.1" y="183" width="1" height="1" fill="#8A8A8A"/>
<rect x="1133.5" y="183" width="1" height="1" fill="#8A8A8A"/>
<rect x="1139.9" y="181.5" width="1" height="4" fill="#707070"/>
<rect x="1146.4" y="183" width="1" height="1" fill="#8A8A8A"/>
<rect x="1152.8" y="183" width="1" height="1" fill="#8A8A8A"/>
<rect x="1159.2" y="183" width="1" height="1" fill="#8A8A8A"/>
<rect x="1172.1" y="183" width="1" height="1" fill="#8A8A8A"/>
<rect x="1178.5" y="183" width="1" height="1" fill="#8A8A8A"/>
<rect x="1184.9" y="183" width="1" height="1" fill="#8A8A8A"/>
<rect x="1191.4" y="181.5" width="1" height="4" fill="#707070"/>
<rect x="1197.8" y="183" width="1" height="1" fill="#8A8A8A"/>
<text x="548.8" y="187.4" text-anchor="middle" font-family="Liberation Sans" font-size="9.8" fill="#505050">6</text>
<text x="600.2" y="187.4" text-anchor="middle" font-family="Liberation Sans" font-size="9.8" fill="#505050">5</text>
<text x="651.6" y="187.4" text-anchor="middle" font-family="Liberation Sans" font-size="9.8" fill="#505050">4</text>
<text x="703.1" y="187.4" text-anchor="middle" font-family="Liberation Sans" font-size="9.8" fill="#505050">3</text>
<text x="754.5" y="187.4" text-anchor="middle" font-family="Liberation Sans" font-size="9.8" fill="#505050">2</text>
<text x="806.0" y="187.4" text-anchor="middle" font-family="Liberation Sans" font-size="9.8" fill="#505050">1</text>
<text x="857.5" y="187.4" text-anchor="middle" font-family="Liberation Sans" font-size="9.8" fill="#505050">0</text>
<text x="908.9" y="187.4" text-anchor="middle" font-family="Liberation Sans" font-size="9.8" fill="#505050">1</text>
<text x="960.4" y="187.4" text-anchor="middle" font-family="Liberation Sans" font-size="9.8" fill="#505050">2</text>
<text x="1011.8" y="187.4" text-anchor="middle" font-family="Liberation Sans" font-size="9.8" fill="#505050">3</text>
<text x="1063.2" y="187.4" text-anchor="middle" font-family="Liberation Sans" font-size="9.8" fill="#505050">4</text>
<text x="1114.7" y="187.4" text-anchor="middle" font-family="Liberation Sans" font-size="9.8" fill="#505050">5</text>
<text x="1166.2" y="187.4" text-anchor="middle" font-family="Liberation Sans" font-size="9.8" fill="#505050">6</text>
<rect x="268.9" y="199.85" width="14.1" height="353.2" fill="#fff"/>
<rect x="275.5" y="201.0" width="1" height="1" fill="#8A8A8A"/>
<rect x="275.5" y="207.5" width="1" height="1" fill="#8A8A8A"/>
<rect x="275.5" y="214.0" width="1" height="1" fill="#8A8A8A"/>
<rect x="275.5" y="227.0" width="1" height="1" fill="#8A8A8A"/>
<rect x="275.5" y="233.5" width="1" height="1" fill="#8A8A8A"/>
<rect x="275.5" y="240.0" width="1" height="1" fill="#8A8A8A"/>
<rect x="274" y="246.4" width="4" height="1" fill="#707070"/>
<rect x="275.5" y="252.9" width="1" height="1" fill="#8A8A8A"/>
<rect x="275.5" y="259.4" width="1" height="1" fill="#8A8A8A"/>
<rect x="275.5" y="265.9" width="1" height="1" fill="#8A8A8A"/>
<rect x="275.5" y="278.9" width="1" height="1" fill="#8A8A8A"/>
<rect x="275.5" y="285.4" width="1" height="1" fill="#8A8A8A"/>
<rect x="275.5" y="291.9" width="1" height="1" fill="#8A8A8A"/>
<rect x="274" y="298.3" width="4" height="1" fill="#707070"/>
<rect x="275.5" y="304.8" width="1" height="1" fill="#8A8A8A"/>
<rect x="275.5" y="311.3" width="1" height="1" fill="#8A8A8A"/>
<rect x="275.5" y="317.8" width="1" height="1" fill="#8A8A8A"/>
<rect x="275.5" y="330.8" width="1" height="1" fill="#8A8A8A"/>
<rect x="275.5" y="337.3" width="1" height="1" fill="#8A8A8A"/>
<rect x="275.5" y="343.8" width="1" height="1" fill="#8A8A8A"/>
<rect x="274" y="350.2" width="4" height="1" fill="#707070"/>
<rect x="275.5" y="356.7" width="1" height="1" fill="#8A8A8A"/>
<rect x="275.5" y="363.2" width="1" height="1" fill="#8A8A8A"/>
<rect x="275.5" y="369.7" width="1" height="1" fill="#8A8A8A"/>
<rect x="275.5" y="382.7" width="1" height="1" fill="#8A8A8A"/>
<rect x="275.5" y="389.2" width="1" height="1" fill="#8A8A8A"/>
<rect x="275.5" y="395.7" width="1" height="1" fill="#8A8A8A"/>
<rect x="274" y="402.1" width="4" height="1" fill="#707070"/>
<rect x="275.5" y="408.6" width="1" height="1" fill="#8A8A8A"/>
<rect x="275.5" y="415.1" width="1" height="1" fill="#8A8A8A"/>
<rect x="275.5" y="421.6" width="1" height="1" fill="#8A8A8A"/>
<rect x="275.5" y="434.6" width="1" height="1" fill="#8A8A8A"/>
<rect x="275.5" y="441.1" width="1" height="1" fill="#8A8A8A"/>
<rect x="275.5" y="447.6" width="1" height="1" fill="#8A8A8A"/>
<rect x="274" y="454.1" width="4" height="1" fill="#707070"/>
<rect x="275.5" y="460.5" width="1" height="1" fill="#8A8A8A"/>
<rect x="275.5" y="467.0" width="1" height="1" fill="#8A8A8A"/>
<rect x="275.5" y="473.5" width="1" height="1" fill="#8A8A8A"/>
<rect x="275.5" y="486.5" width="1" height="1" fill="#8A8A8A"/>
<rect x="275.5" y="493.0" width="1" height="1" fill="#8A8A8A"/>
<rect x="275.5" y="499.5" width="1" height="1" fill="#8A8A8A"/>
<rect x="274" y="505.9" width="4" height="1" fill="#707070"/>
<rect x="275.5" y="512.4" width="1" height="1" fill="#8A8A8A"/>
<rect x="275.5" y="518.9" width="1" height="1" fill="#8A8A8A"/>
<rect x="275.5" y="525.4" width="1" height="1" fill="#8A8A8A"/>
<rect x="275.5" y="538.4" width="1" height="1" fill="#8A8A8A"/>
<rect x="275.5" y="544.9" width="1" height="1" fill="#8A8A8A"/>
<rect x="275.5" y="551.4" width="1" height="1" fill="#8A8A8A"/>
<text x="0" y="0" transform="translate(279.6 221.0) rotate(-90)" text-anchor="middle" font-family="Liberation Sans" font-size="9.8" fill="#505050">3</text>
<text x="0" y="0" transform="translate(279.6 272.9) rotate(-90)" text-anchor="middle" font-family="Liberation Sans" font-size="9.8" fill="#505050">2</text>
<text x="0" y="0" transform="translate(279.6 324.8) rotate(-90)" text-anchor="middle" font-family="Liberation Sans" font-size="9.8" fill="#505050">1</text>
<text x="0" y="0" transform="translate(279.6 376.7) rotate(-90)" text-anchor="middle" font-family="Liberation Sans" font-size="9.8" fill="#505050">0</text>
<text x="0" y="0" transform="translate(279.6 428.6) rotate(-90)" text-anchor="middle" font-family="Liberation Sans" font-size="9.8" fill="#505050">1</text>
<text x="0" y="0" transform="translate(279.6 480.5) rotate(-90)" text-anchor="middle" font-family="Liberation Sans" font-size="9.8" fill="#505050">2</text>
<text x="0" y="0" transform="translate(279.6 532.4) rotate(-90)" text-anchor="middle" font-family="Liberation Sans" font-size="9.8" fill="#505050">3</text>
<path d="M269 414.6 H283" stroke="#E0623A" stroke-width="1" stroke-dasharray="1.5 1.5"/>
<rect x="36.5" y="191.5" width="186" height="107" fill="none" stroke="#EE6A42" stroke-width="3"/>
<rect x="37.5" y="318.5" width="184.5" height="105.5" fill="none" stroke="#C8C8C8"/>
<rect x="37.5" y="444.5" width="184.5" height="105.5" fill="none" stroke="#C8C8C8"/>
<rect x="1098.3" y="560" width="35.5" height="23.5" fill="#C8C8C8"/>
<path d="M1035.5 569.5 L1038.8 566 L1042.1 569.5 Z" fill="#505050"/><path d="M1033 572 H1044.8 M1033 574.5 H1044.8 M1033 577 H1040" stroke="#505050" stroke-width="1"/>
<rect x="1108.7" y="565" width="13.6" height="12.8" fill="none" stroke="#606060" stroke-width="1"/><path d="M1111.5 565 V577.8 M1111.5 574.2 H1122.3" stroke="#606060" stroke-width="1"/><rect x="1114" y="567.3" width="5.5" height="4" fill="none" stroke="#606060" stroke-width="0.9"/>
<rect x="1144.5" y="565" width="5" height="5" fill="none" stroke="#606060"/><rect x="1152.5" y="565" width="5" height="5" fill="none" stroke="#606060"/><rect x="1144.5" y="572.8" width="5" height="5" fill="none" stroke="#606060"/><rect x="1152.5" y="572.8" width="5" height="5" fill="none" stroke="#606060"/>
<path d="M1180.5 565.5 H1194.5 V576.5 H1188 L1187.5 578 L1187 576.5 H1180.5 Z M1187.5 565.5 V576.5" fill="none" stroke="#606060" stroke-width="1"/><path d="M1182.5 568 H1185.5 M1182.5 570.5 H1185.5 M1182.5 573 H1185.5 M1189.5 568 H1192.5 M1189.5 570.5 H1192.5 M1189.5 573 H1192.5" stroke="#808080" stroke-width="0.8"/>
<path d="M1216.3 565.7 H1230.3 M1217.5 565.7 V572.5 H1229 V565.7 M1223.2 572.5 V577.7 M1220 577.7 H1226.5 M1220 568.6 H1226.5" fill="none" stroke="#606060" stroke-width="1"/>
<path d="M1246 571.8 H1254.7" stroke="#505050" stroke-width="1.4"/><path d="M1257.6 571.8 H1365.5" stroke="#B8B8B8" stroke-width="1"/><rect x="1311" y="569" width="1" height="5.5" fill="#B8B8B8"/>
<rect x="1281.5" y="565.8" width="4.7" height="11.6" fill="#606060"/>
<path d="M1368.4 571.8 H1378 M1373.2 567 V576.6" stroke="#505050" stroke-width="1.4"/>
<rect x="1423.7" y="565.7" width="11.5" height="11.5" fill="none" stroke="#606060" stroke-width="1"/><path d="M1429.4 567 V570 M1429.4 573 V576 M1425 571.5 H1428 M1431 571.5 H1434 M1427.8 568.6 L1429.4 570.2 L1431 568.6 M1427.8 574.4 L1429.4 572.8 L1431 574.4" fill="none" stroke="#606060" stroke-width="0.8"/>
<text x="8.3" y="604" font-family="Liberation Sans" font-weight="bold" font-size="15" fill="#fff" textLength="8.7" lengthAdjust="spacingAndGlyphs">?</text>
<text x="23.9" y="604.6" font-family="Liberation Serif" font-weight="bold" font-size="17" fill="#fff" textLength="14.3" lengthAdjust="spacingAndGlyphs">A</text>
<path d="M53 593.5 C48.5 593.5 45.3 595.8 45.3 598.8 C45.3 600.6 46.5 602 48.3 602.8 L46 605.5 L51 603.6 C51.7 603.8 52.3 603.9 53 603.9 C57.5 603.9 60.6 601.6 60.6 598.7 C60.6 595.8 57.5 593.5 53 593.5 Z" fill="none" stroke="#fff" stroke-width="1.6"/>
<rect x="68.4" y="592.8" width="14.2" height="11.2" fill="none" stroke="#fff" stroke-width="1.6"/><rect x="68.4" y="592.8" width="14.2" height="3.2" fill="#fff"/>
<path d="M527.3 659 L534.7 672.4 H519.9 Z" fill="#3A7BBF" stroke="#3A7BBF" stroke-width="1" stroke-linejoin="round"/>
<rect x="526.3" y="663" width="2" height="5" fill="#fff"/><rect x="526.3" y="669" width="2" height="2" fill="#fff"/>
<path d="M770.0 659 L777.5 672.4 H762.5 Z" fill="#3A7BBF" stroke="#3A7BBF" stroke-width="1" stroke-linejoin="round"/>
<rect x="769.0" y="663" width="2" height="5" fill="#fff"/><rect x="769.0" y="669" width="2" height="2" fill="#fff"/>
<path d="M607.0 667 L610.8 670.8 L618.5 663.2" fill="none" stroke="#3A7BBF" stroke-width="2.6"/>
<path d="M688.0 667 L691.8 670.8 L699.5 663.2" fill="none" stroke="#3A7BBF" stroke-width="2.6"/>
<path d="M849.5 667 L853.3 670.8 L861.0 663.2" fill="none" stroke="#3A7BBF" stroke-width="2.6"/>
<path d="M930.0 667 L933.8 670.8 L941.5 663.2" fill="none" stroke="#3A7BBF" stroke-width="2.6"/></svg><div class="t" style="left:24.00px;top:11.80px;font-size:13.768px;line-height:13.768px;color:#FFFFFF;transform:scaleX(0.8920);">AutoSave</div>
<div class="t" style="left:104.00px;top:12.05px;font-size:12.174px;line-height:12.174px;color:#FFFFFF;transform:scaleX(0.8247);">Off</div>
<div class="t" style="left:615.00px;top:9.88px;font-size:14.493px;line-height:14.493px;color:#FFFFFF;transform:scaleX(0.8678);">Aristoteles.pptx  -  Saved to this PC</div>
<div class="t" style="left:1189.60px;top:13.08px;font-size:12.609px;line-height:12.609px;color:#B7472A;">Sign in</div>
<div class="t" style="left:17.37px;top:46.38px;font-size:14.493px;line-height:14.493px;color:#484848;transform:scaleX(0.9289);">File</div>
<div class="t" style="left:133.38px;top:46.38px;font-size:14.493px;line-height:14.493px;color:#484848;transform:scaleX(1.0170);">Insert</div>
<div class="t" style="left:193.41px;top:46.38px;font-size:14.493px;line-height:14.493px;color:#484848;transform:scaleX(0.9925);">Design</div>
<div class="t" style="left:262.30px;top:46.38px;font-size:14.493px;line-height:14.493px;color:#484848;transform:scaleX(0.9806);">Transitions</div>
<div class="t" style="left:355.00px;top:46.38px;font-size:14.493px;line-height:14.493px;color:#484848;transform:scaleX(1.0265);">Animations</div>
<div class="t" style="left:451.70px;top:46.38px;font-size:14.493px;line-height:14.493px;color:#484848;transform:scaleX(0.9588);">Slide Show</div>
<div class="t" style="left:545.74px;top:46.38px;font-size:14.493px;line-height:14.493px;color:#484848;transform:scaleX(0.9568);">Review</div>
<div class="t" style="left:616.70px;top:46.38px;font-size:14.493px;line-height:14.493px;color:#484848;transform:scaleX(0.9661);">View</div>
<div class="t" style="left:670.69px;top:46.38px;font-size:14.493px;line-height:14.493px;color:#484848;transform:scaleX(1.0093);">Help</div>
<div class="t" style="left:726.00px;top:46.38px;font-size:14.493px;line-height:14.493px;color:#484848;transform:scaleX(1.0130);">Storyboarding</div>
<div class="t" style="left:870.70px;top:46.38px;font-size:14.493px;line-height:14.493px;color:#484848;transform:scaleX(1.0443);">Tell me what you want to do</div>
<div class="t" style="left:69.75px;top:46.38px;font-size:14.493px;line-height:14.493px;color:#333333;transform:scaleX(1.0537);-webkit-text-stroke:0.35px #333;">Home</div>
<div class="t" style="left:1266.60px;top:47.32px;font-size:13.623px;line-height:13.623px;color:#B7472A;transform:scaleX(1.0183);-webkit-text-stroke:0.45px #B7472A;">Share</div>
<div class="t" style="left:1347.70px;top:47.32px;font-size:13.623px;line-height:13.623px;color:#B7472A;transform:scaleX(1.0850);-webkit-text-stroke:0.45px #B7472A;">Comments</div>
<div class="t" style="left:16.52px;top:114.27px;font-size:13.333px;line-height:13.333px;color:#444444;transform:scaleX(0.8754);">Paste</div>
<div class="t" style="left:15.60px;top:157.78px;font-size:10.725px;line-height:10.725px;color:#444444;transform:scaleX(1.0780);">Clipboard</div>
<div class="t" style="left:118.02px;top:114.64px;font-size:12.899px;line-height:12.899px;color:#444444;transform:scaleX(0.9820);">New</div>
<div class="t" style="left:112.80px;top:131.91px;font-size:13.043px;line-height:13.043px;color:#444444;transform:scaleX(0.9677);">Slide</div>
<div class="t" style="left:177.08px;top:80.90px;font-size:13.768px;line-height:13.768px;color:#444444;transform:scaleX(0.9218);">Layout</div>
<div class="t" style="left:177.63px;top:106.04px;font-size:13.478px;line-height:13.478px;color:#444444;transform:scaleX(0.8652);">Reset</div>
<div class="t" style="left:178.00px;top:130.27px;font-size:13.913px;line-height:13.913px;color:#444444;transform:scaleX(0.9113);">Section</div>
<div class="t" style="left:156.25px;top:157.78px;font-size:10.725px;line-height:10.725px;color:#444444;">Slides</div>
<div class="t" style="left:398.06px;top:89.04px;font-size:13.478px;line-height:13.478px;color:#7A7A7A;transform:scaleX(0.9414);">17</div>
<div class="t" style="left:366.70px;top:158.08px;font-size:10.725px;line-height:10.725px;color:#444444;transform:scaleX(1.0061);">Font</div>
<div class="t" style="left:666.00px;top:157.54px;font-size:11.014px;line-height:11.014px;color:#444444;transform:scaleX(1.0205);">Paragraph</div>
<div class="t" style="left:735.40px;top:80.81px;font-size:13.043px;line-height:13.043px;color:#A6A6A6;transform:scaleX(0.9887);">Text Direction</div>
<div class="t" style="left:735.40px;top:106.24px;font-size:12.899px;line-height:12.899px;color:#A6A6A6;transform:scaleX(0.9886);">Align Text</div>
<div class="t" style="left:735.00px;top:130.81px;font-size:13.043px;line-height:13.043px;color:#A6A6A6;transform:scaleX(0.9782);">Convert to SmartArt</div>
<div class="t" style="left:1039.60px;top:114.79px;font-size:13.188px;line-height:13.188px;color:#444444;transform:scaleX(0.9778);">Arrange</div>
<div class="t" style="left:1097.90px;top:115.16px;font-size:12.754px;line-height:12.754px;color:#A6A6A6;transform:scaleX(0.9604);">Quick</div>
<div class="t" style="left:1093.00px;top:132.56px;font-size:12.754px;line-height:12.754px;color:#A6A6A6;transform:scaleX(0.9463);">Styles</div>
<div class="t" style="left:1162.60px;top:78.46px;font-size:12.754px;line-height:12.754px;color:#A6A6A6;transform:scaleX(0.9666);">Shape Fill</div>
<div class="t" style="left:1162.60px;top:101.60px;font-size:12.826px;line-height:12.826px;color:#A6A6A6;transform:scaleX(0.9756);">Shape Outline</div>
<div class="t" style="left:1161.80px;top:124.76px;font-size:12.754px;line-height:12.754px;color:#A6A6A6;transform:scaleX(0.9635);">Shape Effects</div>
<div class="t" style="left:1038.00px;top:157.82px;font-size:10.507px;line-height:10.507px;color:#444444;transform:scaleX(1.0524);">Drawing</div>
<div class="t" style="left:1294.66px;top:77.92px;font-size:13.623px;line-height:13.623px;color:#444444;transform:scaleX(0.9355);">Find</div>
<div class="t" style="left:1294.70px;top:101.10px;font-size:13.768px;line-height:13.768px;color:#444444;transform:scaleX(0.8976);">Replace</div>
<div class="t" style="left:1295.60px;top:124.70px;font-size:13.768px;line-height:13.768px;color:#444444;transform:scaleX(0.8673);">Select</div>
<div class="t" style="left:1298.00px;top:157.54px;font-size:11.014px;line-height:11.014px;color:#444444;transform:scaleX(1.0055);">Editing</div>
<div class="t" style="left:13.31px;top:189.95px;font-size:15.942px;line-height:15.942px;color:#D24726;transform:scaleX(0.6875);">1</div>
<div class="t" style="left:13.10px;top:317.52px;font-size:15.507px;line-height:15.507px;color:#444444;transform:scaleX(0.9750);">2</div>
<div class="t" style="left:13.10px;top:444.72px;font-size:15.507px;line-height:15.507px;color:#444444;transform:scaleX(0.9750);">3</div>
<div class="t" style="left:5.80px;top:567.40px;font-size:11.884px;line-height:11.884px;color:#444444;transform:scaleX(0.9480);">Slide 1 of 5</div>
<div class="t" style="left:1049.90px;top:566.74px;font-size:11.594px;line-height:11.594px;color:#444444;transform:scaleX(0.9719);">Notes</div>
<div class="t" style="left:1388.00px;top:566.93px;font-size:12.319px;line-height:12.319px;color:#444444;transform:scaleX(0.8226);">50%</div>
<div class="t" style="left:98.07px;top:592.18px;font-size:14.493px;line-height:14.493px;color:#FFFFFF;transform:scaleX(0.9261);">Projekt 2 von 7</div>
<div class="t" style="left:695.00px;top:592.86px;font-size:13.406px;line-height:13.406px;color:#FFFFFF;transform:scaleX(1.0063);">00:00:32</div>
<div class="t" style="left:902.00px;top:592.18px;font-size:14.493px;line-height:14.493px;color:#FFFFFF;transform:scaleX(0.8975);">Zusammenfassung</div>
<div class="t" style="left:1036.56px;top:592.18px;font-size:14.493px;line-height:14.493px;color:#FFFFFF;transform:scaleX(0.9434);">Projekt Neustart</div>
<div class="t" style="left:1159.50px;top:592.18px;font-size:14.493px;line-height:14.493px;color:#FFFFFF;transform:scaleX(0.9075);">Speichern und Beenden</div>
<div class="t" style="left:1325.09px;top:592.18px;font-size:14.493px;line-height:14.493px;color:#FFFFFF;transform:scaleX(0.9128);">Nächstes Projekt</div>
<div class="t" style="left:404.30px;top:639.12px;font-size:13.623px;line-height:13.623px;color:#3A7BBF;">Überblick</div>
<div class="t" style="left:498.60px;top:639.12px;font-size:13.623px;line-height:13.623px;color:#3A7BBF;transform:scaleX(0.9794);">Aufgabe</div>
<div class="t" style="left:580.00px;top:639.12px;font-size:13.623px;line-height:13.623px;color:#3A7BBF;transform:scaleX(0.9774);">Aufgabe</div>
<div class="t" style="left:660.80px;top:639.12px;font-size:13.623px;line-height:13.623px;color:#3A7BBF;transform:scaleX(0.9814);">Aufgabe</div>
<div class="t" style="left:741.50px;top:639.12px;font-size:13.623px;line-height:13.623px;color:#3A7BBF;transform:scaleX(0.9874);">Aufgabe</div>
<div class="t" style="left:822.50px;top:639.12px;font-size:13.623px;line-height:13.623px;color:#3A7BBF;transform:scaleX(0.9774);">Aufgabe</div>
<div class="t" style="left:903.50px;top:639.12px;font-size:13.623px;line-height:13.623px;color:#3A7BBF;transform:scaleX(0.9774);">Aufgabe</div>
<div class="t" style="left:984.50px;top:639.12px;font-size:13.623px;line-height:13.623px;color:#FFFFFF;transform:scaleX(0.9874);">Aufgabe</div>
<div class="t" style="left:508.28px;top:661.32px;font-size:13.623px;line-height:13.623px;color:#3A7BBF;transform:scaleX(0.9167);">1</div>
<div class="t" style="left:590.20px;top:661.32px;font-size:13.623px;line-height:13.623px;color:#3A7BBF;transform:scaleX(0.9143);">2</div>
<div class="t" style="left:670.50px;top:661.32px;font-size:13.623px;line-height:13.623px;color:#3A7BBF;transform:scaleX(0.9143);">3</div>
<div class="t" style="left:751.00px;top:661.32px;font-size:13.623px;line-height:13.623px;color:#3A7BBF;transform:scaleX(0.9375);">4</div>
<div class="t" style="left:832.50px;top:661.32px;font-size:13.623px;line-height:13.623px;color:#3A7BBF;">5</div>
<div class="t" style="left:913.50px;top:661.32px;font-size:13.623px;line-height:13.623px;color:#3A7BBF;">6</div>
<div class="t" style="left:1001.50px;top:661.32px;font-size:13.623px;line-height:13.623px;color:#FFFFFF;">7</div>
<div class="t" style="left:392.11px;top:702.19px;font-size:15.072px;line-height:15.072px;color:#333333;transform:scaleX(0.8858);">Fügen Sie einen Kommentar für den Titel</div>
<div class="t" style="left:638.07px;top:702.19px;font-size:15.072px;line-height:15.072px;color:#222;font-weight:bold;transform:scaleX(0.8312);">Einteilung der Wissenschaft</div>
<div class="t" style="left:809.70px;top:702.19px;font-size:15.072px;line-height:15.072px;color:#333333;transform:scaleX(0.8799);">ein. Verwenden Sie das Wort</div>
<div class="t" style="left:985.30px;top:702.19px;font-size:15.072px;line-height:15.072px;color:#222;font-weight:bold;transform:scaleX(0.7352);">OK</div>
<div class="t" style="left:1001.90px;top:702.19px;font-size:15.072px;line-height:15.072px;color:#333333;transform:scaleX(1.4000);">.</div>
<div class="t" style="left:413.50px;top:825.32px;font-size:13.623px;line-height:13.623px;color:#FFFFFF;transform:scaleX(0.9869);">Vorherige Aufgabe</div>
<div class="t" style="left:554.10px;top:825.32px;font-size:13.623px;line-height:13.623px;color:#FFFFFF;">Zur Überarbeitung markieren</div>
<div class="t" style="left:758.70px;top:825.32px;font-size:13.623px;line-height:13.623px;color:#FFFFFF;transform:scaleX(0.9936);">Als erledigt markieren</div>
<div class="t" style="left:919.03px;top:825.32px;font-size:13.623px;line-height:13.623px;color:#FFFFFF;transform:scaleX(0.9724);">Nächste Aufgabe</div>
</body></html>
